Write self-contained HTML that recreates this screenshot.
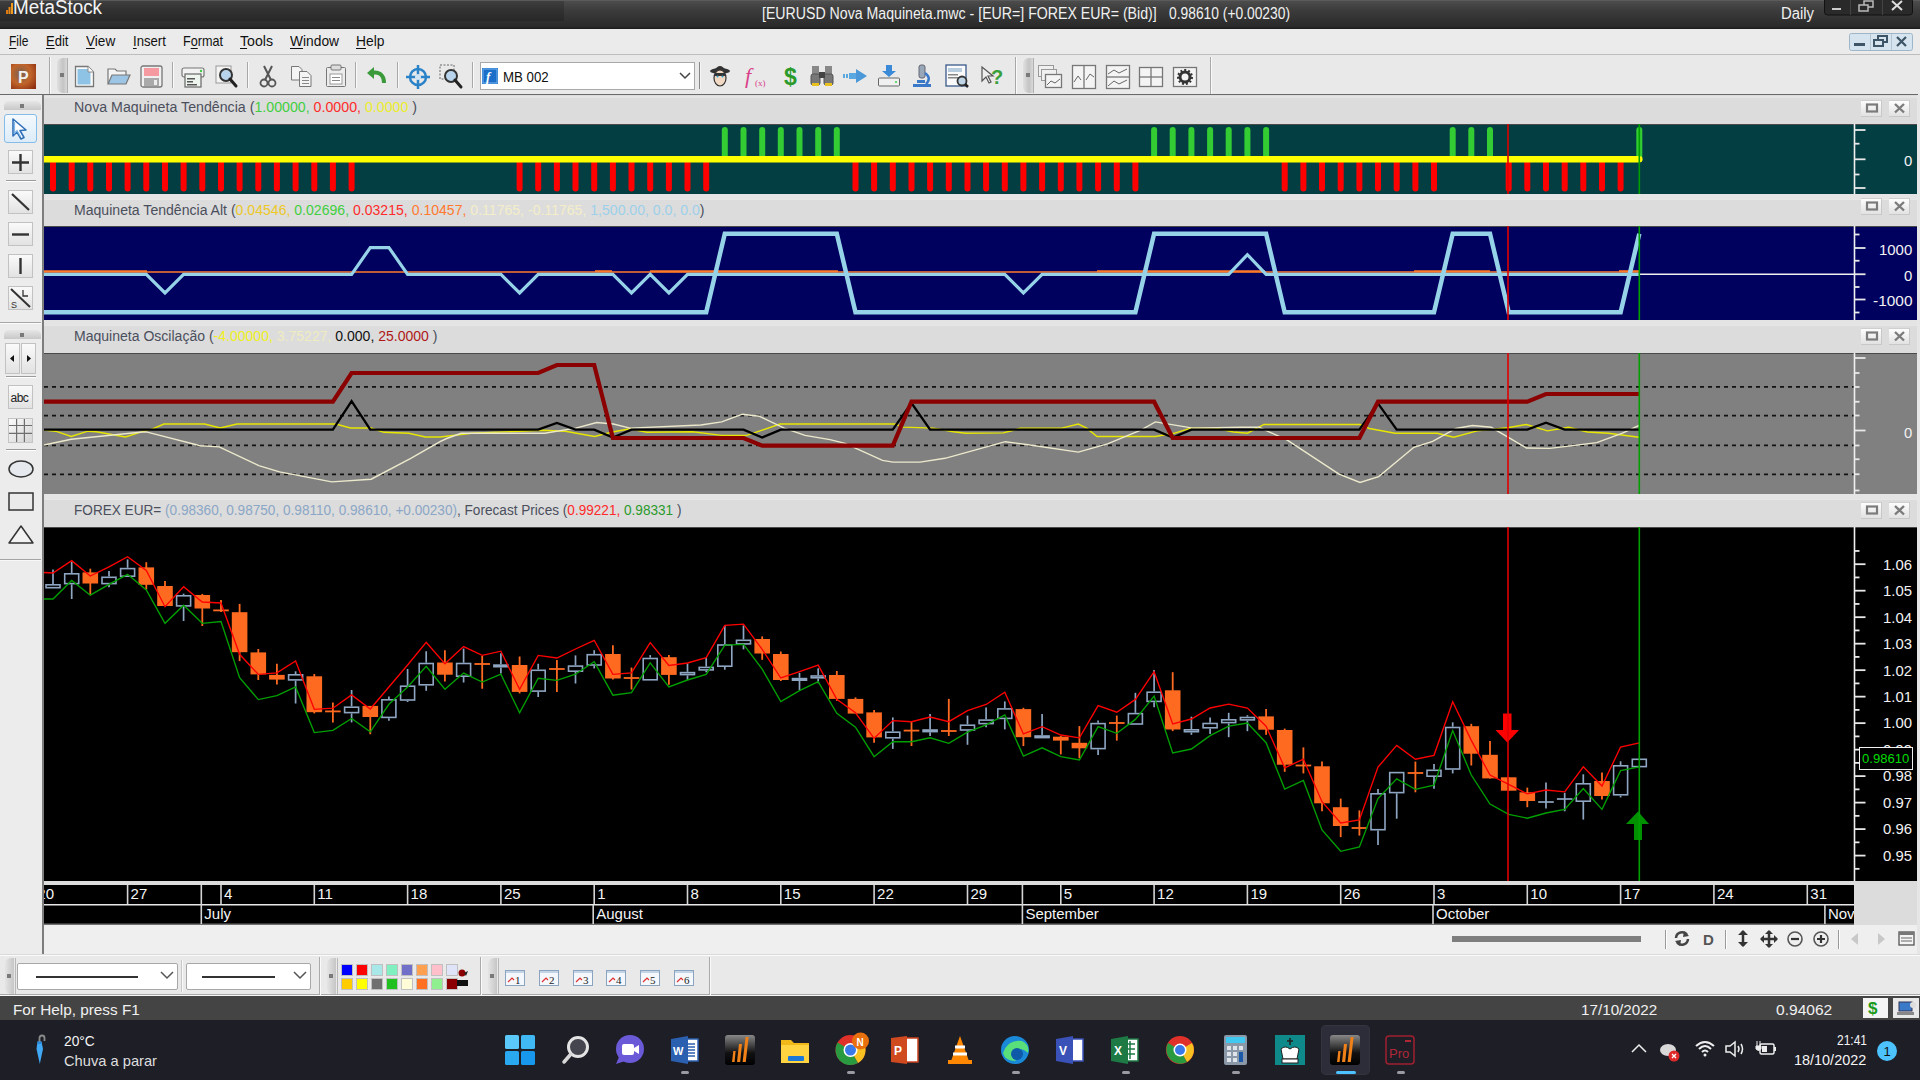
<!DOCTYPE html><html><head><meta charset="utf-8"><style>
html,body{margin:0;padding:0;width:1920px;height:1080px;overflow:hidden;background:#e9e9e9;font-family:"Liberation Sans",sans-serif;}
.t{position:absolute;white-space:nowrap;line-height:1;}
svg{position:absolute;overflow:visible}
</style></head><body>
<div style="position:absolute;left:0px;top:0px;width:1920px;height:29px;background:linear-gradient(#626262 0px,#4b4b4b 1.5px,#3c3c3c 10px,#2a2a2a 26.5px,#1d1d1d 28.5px)"></div>
<div style="position:absolute;left:0px;top:1px;width:564px;height:20px;background:rgba(0,0,0,0.17)"></div>
<svg style="left:0;top:0" width="20" height="20"><rect x="6" y="10" width="2" height="4" fill="#e07a10"/><rect x="8.5" y="7" width="2" height="7" fill="#e88a18"/><rect x="11" y="3" width="2" height="11" fill="#f09a20"/></svg>
<div class="t " style="left:13.4px;top:-3.33px;font-size:20px;color:#f4f4f4;;transform:scaleX(0.9420);transform-origin:0 0">MetaStock</div>
<div class="t " style="left:762px;top:6.06px;font-size:16px;color:#f0f0f0;;transform:scaleX(0.8843);transform-origin:0 0">[EURUSD Nova Maquineta.mwc - [EUR=] FOREX EUR= (Bid)]</div>
<div class="t " style="left:1169px;top:6.06px;font-size:16px;color:#f0f0f0;;transform:scaleX(0.8635);transform-origin:0 0">0.98610 (+0.00230)</div>
<div class="t " style="left:1781px;top:6.06px;font-size:16px;color:#f0f0f0;;transform:scaleX(0.9279);transform-origin:0 0">Daily</div>
<svg style="left:1824;top:0" width="96" height="17"><rect x="0.5" y="-2" width="88" height="17" rx="3" fill="#2a2a2a" stroke="#111"/><line x1="26.5" y1="0" x2="26.5" y2="15" stroke="#444"/><line x1="58.5" y1="0" x2="58.5" y2="15" stroke="#444"/><rect x="8" y="8" width="9" height="2" fill="#ccc"/><rect x="40" y="1" width="9" height="6" fill="none" stroke="#bbb" stroke-width="1.5"/><rect x="35" y="5" width="9" height="6" fill="#2a2a2a" stroke="#bbb" stroke-width="1.5"/><path d="M68 1 L78 10 M78 1 L68 10" stroke="#ddd" stroke-width="2"/></svg>
<div style="position:absolute;left:0px;top:29px;width:1920px;height:25px;background:#ebebeb;border-bottom:1px solid #bdbdbd"></div>
<div class="t " style="left:9.4px;top:33.3px;font-size:15px;color:#111;text-decoration-thickness:1px;text-underline-offset:2px;transform:scaleX(0.8021);transform-origin:0 0"><u>F</u>ile</div>
<div class="t " style="left:46.25px;top:33.3px;font-size:15px;color:#111;text-decoration-thickness:1px;text-underline-offset:2px;transform:scaleX(0.8701);transform-origin:0 0"><u>E</u>dit</div>
<div class="t " style="left:85.8px;top:33.3px;font-size:15px;color:#111;text-decoration-thickness:1px;text-underline-offset:2px;transform:scaleX(0.9054);transform-origin:0 0"><u>V</u>iew</div>
<div class="t " style="left:132.7px;top:33.3px;font-size:15px;color:#111;text-decoration-thickness:1px;text-underline-offset:2px;transform:scaleX(0.8766);transform-origin:0 0"><u>I</u>nsert</div>
<div class="t " style="left:183px;top:33.3px;font-size:15px;color:#111;text-decoration-thickness:1px;text-underline-offset:2px;transform:scaleX(0.8418);transform-origin:0 0">F<u>o</u>rmat</div>
<div class="t " style="left:240px;top:33.3px;font-size:15px;color:#111;text-decoration-thickness:1px;text-underline-offset:2px;transform:scaleX(0.9420);transform-origin:0 0"><u>T</u>ools</div>
<div class="t " style="left:290px;top:33.3px;font-size:15px;color:#111;text-decoration-thickness:1px;text-underline-offset:2px;transform:scaleX(0.9180);transform-origin:0 0"><u>W</u>indow</div>
<div class="t " style="left:356px;top:33.3px;font-size:15px;color:#111;text-decoration-thickness:1px;text-underline-offset:2px;transform:scaleX(0.9198);transform-origin:0 0"><u>H</u>elp</div>
<svg style="left:1849;top:33" width="66" height="19"><rect x="0.5" y="0.5" width="63" height="17" rx="2" fill="#d6e4ef" stroke="#9fb6c8"/><line x1="21.5" y1="1" x2="21.5" y2="17" stroke="#b4c6d4"/><line x1="42.5" y1="1" x2="42.5" y2="17" stroke="#b4c6d4"/><rect x="5" y="10" width="11" height="3" fill="#3d5566"/><rect x="29" y="3" width="9" height="6" fill="none" stroke="#3d5566" stroke-width="2"/><rect x="25" y="7" width="9" height="6" fill="#d6e4ef" stroke="#3d5566" stroke-width="2"/><path d="M48 4 L57 13 M57 4 L48 13" stroke="#3d5566" stroke-width="2.2"/></svg>
<div style="position:absolute;left:0px;top:55px;width:1920px;height:39px;background:#e9e9e9"></div>
<div style="position:absolute;left:0px;top:94px;width:1918px;height:2px;background:#6a6a6a"></div>
<svg style="left:11px;top:64px" width="26" height="25" viewBox="0 0 26 25"><defs><radialGradient id="pg" cx="40%" cy="40%" r="80%"><stop offset="0" stop-color="#7a6050"/><stop offset="0.5" stop-color="#c0642a"/><stop offset="1" stop-color="#8a2a10"/></radialGradient></defs><rect width="25" height="25" fill="url(#pg)"/><text x="7" y="19" font-size="16" font-weight="bold" fill="#f0f0f0" font-family="Liberation Sans">P</text></svg>
<div style="position:absolute;left:49px;top:57px;width:1px;height:37px;background:#a8a8a8"></div>
<div style="position:absolute;left:50px;top:57px;width:1px;height:37px;background:#fafafa"></div>
<div style="position:absolute;left:57px;top:58px;width:10px;height:35px;background:linear-gradient(90deg,#e0e0e0,#c4c4c4 60%,#d8d8d8);border-radius:6px 0 0 6px"></div>
<div style="position:absolute;left:60px;top:73px;width:4px;height:4px;background:#7a7a7a"></div>
<div style="position:absolute;left:67px;top:58px;width:1px;height:35px;background:#b0b0b0"></div>
<svg style="left:74px;top:65px" width="21" height="23" viewBox="0 0 21 23"><path d="M1.5 1.5 H14 L19.5 7 V21.5 H1.5 Z" fill="#fafafa" stroke="#777" stroke-width="1.3"/><rect x="3.5" y="4" width="13" height="15.5" fill="#8ec3e6"/><path d="M14 1.5 V7 H19.5" fill="#fff" stroke="#888"/></svg>
<svg style="left:107px;top:66px" width="24" height="20" viewBox="0 0 24 20"><path d="M1 3 H8 L10 5 H19 V17 H1 Z" fill="#f4f4f4" stroke="#777" stroke-width="1.2"/><path d="M1 18 L5 9 H23 L19 18 Z" fill="#9cc4e4" stroke="#777" stroke-width="1.2"/></svg>
<svg style="left:140px;top:65px" width="23" height="23" viewBox="0 0 23 23"><rect x="1" y="1" width="21" height="21" rx="2" fill="#f0f0f0" stroke="#777" stroke-width="1.3"/><rect x="4" y="3" width="15" height="8" fill="#f59aa0"/><rect x="4" y="13" width="15" height="8" fill="#aaa"/><rect x="14" y="15" width="3" height="5" fill="#eee"/></svg>
<div style="position:absolute;left:172px;top:62px;width:1px;height:26px;background:#a8a8a8"></div>
<div style="position:absolute;left:173px;top:62px;width:1px;height:26px;background:#fafafa"></div>
<svg style="left:181px;top:66px" width="24" height="22" viewBox="0 0 24 22"><rect x="1" y="2" width="22" height="9" rx="2" fill="#f2f2f2" stroke="#777" stroke-width="1.2"/><rect x="4" y="8" width="16" height="13" fill="#eef4ee" stroke="#666" stroke-width="1.2"/><rect x="6" y="12" width="8" height="1.5" fill="#555"/><rect x="6" y="15" width="6" height="1.5" fill="#555"/><rect x="6" y="18" width="10" height="1.5" fill="#555"/><circle cx="20" cy="5" r="1.2" fill="#4c4"/></svg>
<svg style="left:215px;top:65px" width="23" height="24" viewBox="0 0 23 24"><rect x="1" y="1" width="15" height="17" fill="#f4f4f4" stroke="#999"/><circle cx="11" cy="10" r="6" fill="#b8d4ec" stroke="#333" stroke-width="2"/><path d="M15 14 L21 21" stroke="#222" stroke-width="3" stroke-linecap="round"/></svg>
<div style="position:absolute;left:247px;top:62px;width:1px;height:26px;background:#a8a8a8"></div>
<div style="position:absolute;left:248px;top:62px;width:1px;height:26px;background:#fafafa"></div>
<svg style="left:259px;top:65px" width="18" height="23" viewBox="0 0 18 23"><path d="M5 1 L12 15 M13 1 L6 15" stroke="#555" stroke-width="2"/><circle cx="5" cy="18" r="3.5" fill="none" stroke="#555" stroke-width="1.8"/><circle cx="13" cy="18" r="3.5" fill="none" stroke="#555" stroke-width="1.8"/></svg>
<svg style="left:290px;top:65px" width="23" height="23" viewBox="0 0 23 23"><path d="M1.5 1.5 H9 L12 4.5 V15 H1.5 Z" fill="#f4f4f4" stroke="#777"/><path d="M9.5 6.5 H17 L21 10.5 V21.5 H9.5 Z" fill="#f4f4f4" stroke="#777"/><rect x="12" y="12" width="7" height="1" fill="#888"/><rect x="12" y="15" width="7" height="1" fill="#888"/><rect x="12" y="18" width="7" height="1" fill="#888"/></svg>
<svg style="left:325px;top:64px" width="22" height="24" viewBox="0 0 22 24"><rect x="1.5" y="3.5" width="19" height="19" rx="1" fill="#ececec" stroke="#777"/><rect x="6" y="1" width="10" height="5" rx="1" fill="#ddd" stroke="#777"/><rect x="5" y="10" width="12" height="10" fill="#fff" stroke="#999"/><rect x="7" y="13" width="8" height="1" fill="#888"/><rect x="7" y="16" width="8" height="1" fill="#888"/></svg>
<div style="position:absolute;left:355px;top:62px;width:1px;height:26px;background:#a8a8a8"></div>
<div style="position:absolute;left:356px;top:62px;width:1px;height:26px;background:#fafafa"></div>
<svg style="left:366px;top:66px" width="21" height="20" viewBox="0 0 21 20"><path d="M18 17 C18 8 12 5 5 7" fill="none" stroke="#3a9a3a" stroke-width="4"/><path d="M1 7 L8 1 L8 13 Z" fill="#3a9a3a"/></svg>
<div style="position:absolute;left:397px;top:62px;width:1px;height:26px;background:#a8a8a8"></div>
<div style="position:absolute;left:398px;top:62px;width:1px;height:26px;background:#fafafa"></div>
<svg style="left:405px;top:64px" width="26" height="26" viewBox="0 0 26 26"><circle cx="13" cy="13" r="8" fill="none" stroke="#2a82c8" stroke-width="2.5"/><path d="M13 1 V25 M1 13 H25" stroke="#2a82c8" stroke-width="2.5"/><circle cx="13" cy="13" r="3" fill="#cfe4f4"/></svg>
<svg style="left:439px;top:64px" width="24" height="26" viewBox="0 0 24 26"><rect x="1" y="1" width="14" height="14" fill="none" stroke="#666" stroke-dasharray="2 1.5"/><circle cx="12" cy="12" r="6" fill="#b8d4ec" stroke="#333" stroke-width="2"/><path d="M16 16 L22 23" stroke="#222" stroke-width="3" stroke-linecap="round"/></svg>
<div style="position:absolute;left:472px;top:62px;width:1px;height:26px;background:#a8a8a8"></div>
<div style="position:absolute;left:473px;top:62px;width:1px;height:26px;background:#fafafa"></div>
<div style="position:absolute;left:480px;top:62px;width:215px;height:28px;background:#fff;border:1px solid #a9a9a9;box-sizing:border-box"></div>
<svg style="left:482px;top:68px" width="17" height="17" viewBox="0 0 17 17"><rect width="16" height="16" fill="#1b6fc8"/><rect x="1" y="1" width="14" height="14" fill="none" stroke="#7ab4ee"/><text x="4" y="13" font-size="13" font-style="italic" font-weight="bold" fill="#fff" font-family="Liberation Serif">f</text></svg>
<div class="t " style="left:503px;top:69.3px;font-size:15px;color:#111;;transform:scaleX(0.8849);transform-origin:0 0">MB 002</div>
<svg style="left:679px;top:72px" width="12" height="8" viewBox="0 0 12 8"><path d="M1 1 L6 6 L11 1" fill="none" stroke="#444" stroke-width="1.5"/></svg>
<div style="position:absolute;left:699px;top:62px;width:1px;height:27px;background:#888"></div>
<div style="position:absolute;left:700px;top:62px;width:1px;height:27px;background:#f5f5f5"></div>
<svg style="left:709px;top:64px" width="22" height="24" viewBox="0 0 22 24"><ellipse cx="11" cy="7" rx="10" ry="3" fill="#333"/><path d="M5 7 Q11 -3 17 7 Z" fill="#333"/><ellipse cx="11" cy="14" rx="6" ry="8" fill="#f2d9c4" stroke="#333" stroke-width="1.2"/><rect x="6" y="9" width="10" height="3" fill="#333"/><circle cx="8.5" cy="12.5" r="1" fill="#39c"/><circle cx="13.5" cy="12.5" r="1" fill="#39c"/></svg>
<svg style="left:743px;top:64px" width="24" height="24" viewBox="0 0 24 24"><text x="2" y="19" font-size="22" font-style="italic" fill="#d9408a" font-family="Liberation Serif">f</text><text x="12" y="22" font-size="9" fill="#d9408a" font-family="Liberation Serif">(x)</text></svg>
<svg style="left:780px;top:63px" width="22" height="26" viewBox="0 0 22 26"><text x="4" y="22" font-size="23" font-weight="bold" fill="#2a9a2a" font-family="Liberation Sans">$</text></svg>
<svg style="left:810px;top:64px" width="24" height="24" viewBox="0 0 24 24"><rect x="2" y="2" width="7" height="10" fill="#888"/><rect x="15" y="2" width="7" height="10" fill="#888"/><rect x="1" y="10" width="9" height="11" rx="2" fill="#777" stroke="#555"/><rect x="14" y="10" width="9" height="11" rx="2" fill="#777" stroke="#555"/><rect x="9" y="8" width="6" height="6" fill="#444"/><rect x="2" y="19" width="7" height="3" fill="#e8c020"/><rect x="15" y="19" width="7" height="3" fill="#e8c020"/></svg>
<svg style="left:842px;top:68px" width="26" height="16" viewBox="0 0 26 16"><rect x="1" y="6" width="2" height="4" fill="#5aa8e0"/><rect x="4" y="6" width="2" height="4" fill="#5aa8e0"/><rect x="7" y="5" width="8" height="6" fill="#5aa8e0"/><path d="M14 1 L25 8 L14 15 Z" fill="#4a98d8"/></svg>
<svg style="left:877px;top:64px" width="24" height="24" viewBox="0 0 24 24"><path d="M9 1 H15 V7 H19 L12 13 L5 7 H9 Z" fill="#3a8ad8"/><rect x="1.5" y="14" width="21" height="8" rx="1" fill="#f0f0f0" stroke="#666"/><circle cx="19" cy="18" r="1" fill="#4c4"/></svg>
<svg style="left:911px;top:64px" width="22" height="25" viewBox="0 0 22 25"><rect x="8" y="1" width="6" height="13" rx="2" fill="#98a8b8" stroke="#667"/><path d="M14 9 Q21 14 15 20" fill="none" stroke="#3a78c8" stroke-width="2.5"/><rect x="2" y="20" width="18" height="3" fill="#3a78c8"/><rect x="6" y="16" width="8" height="3" fill="#3a78c8"/></svg>
<svg style="left:945px;top:64px" width="24" height="24" viewBox="0 0 24 24"><rect x="1" y="1" width="20" height="21" fill="#fafafa" stroke="#3a5a8a" stroke-width="1.3"/><rect x="3" y="4" width="14" height="4" fill="#b8cce0"/><rect x="3" y="10" width="10" height="1.5" fill="#888"/><rect x="3" y="13" width="10" height="1.5" fill="#888"/><circle cx="17" cy="17" r="4.5" fill="#c0d4e8" stroke="#333" stroke-width="1.8"/><path d="M20 20 L23 23" stroke="#222" stroke-width="2.5"/></svg>
<svg style="left:980px;top:65px" width="24" height="23" viewBox="0 0 24 23"><path d="M2 2 L2 16 L6 12 L9 18 L11 17 L8 11 L13 11 Z" fill="#eee" stroke="#555" stroke-width="1.2"/><text x="11" y="19" font-size="20" font-weight="bold" fill="#3aa03a" font-family="Liberation Sans">?</text></svg>
<div style="position:absolute;left:1015px;top:57px;width:1px;height:37px;background:#a8a8a8"></div>
<div style="position:absolute;left:1016px;top:57px;width:1px;height:37px;background:#fafafa"></div>
<div style="position:absolute;left:1023px;top:58px;width:10px;height:35px;background:linear-gradient(90deg,#e0e0e0,#c4c4c4 60%,#d8d8d8);border-radius:6px 0 0 6px"></div>
<div style="position:absolute;left:1026px;top:73px;width:4px;height:4px;background:#7a7a7a"></div>
<div style="position:absolute;left:1033px;top:58px;width:1px;height:35px;background:#b0b0b0"></div>
<svg style="left:1037px;top:64px" width="26" height="26" viewBox="0 0 26 26"><rect x="1.5" y="1.5" width="15" height="11" fill="#f0f0f0" stroke="#999"/><rect x="4.5" y="5.5" width="15" height="11" fill="#f0f0f0" stroke="#999"/><rect x="8.5" y="10.5" width="16" height="13" fill="#f4f4f4" stroke="#777" stroke-width="1.3"/><path d="M10 21 L14 17 L18 19 L23 15" fill="none" stroke="#666"/></svg>
<svg style="left:1071px;top:64px" width="26" height="26" viewBox="0 0 26 26"><rect x="1.5" y="1.5" width="23" height="23" fill="#f4f4f4" stroke="#777" stroke-width="1.3"/><line x1="13" y1="1" x2="13" y2="25" stroke="#777" stroke-width="1.3"/><path d="M3 18 L7 12 L10 16 M15 16 L19 10 L23 13" fill="none" stroke="#666"/></svg>
<svg style="left:1105px;top:64px" width="26" height="26" viewBox="0 0 26 26"><rect x="1.5" y="1.5" width="23" height="23" fill="#f4f4f4" stroke="#777" stroke-width="1.3"/><line x1="1" y1="13" x2="25" y2="13" stroke="#777" stroke-width="1.3"/><path d="M3 10 L9 6 L14 9 L22 5 M3 22 L9 17 L14 20 L22 16" fill="none" stroke="#666"/></svg>
<svg style="left:1138px;top:64px" width="26" height="26" viewBox="0 0 26 26"><rect x="1.5" y="3.5" width="23" height="19" fill="#f4f4f4" stroke="#777" stroke-width="1.3"/><line x1="13" y1="3" x2="13" y2="23" stroke="#777" stroke-width="1.3"/><line x1="1" y1="13" x2="25" y2="13" stroke="#777" stroke-width="1.3"/></svg>
<svg style="left:1172px;top:64px" width="26" height="26" viewBox="0 0 26 26"><rect x="1.5" y="3.5" width="23" height="19" fill="#f4f4f4" stroke="#777" stroke-width="1.3"/><circle cx="13" cy="13" r="5" fill="none" stroke="#333" stroke-width="3"/><circle cx="13" cy="13" r="7" fill="none" stroke="#333" stroke-width="2" stroke-dasharray="2 2"/></svg>
<div style="position:absolute;left:1210px;top:57px;width:1px;height:37px;background:#a8a8a8"></div>
<div style="position:absolute;left:1211px;top:57px;width:1px;height:37px;background:#fafafa"></div>
<div style="position:absolute;left:0px;top:95px;width:42px;height:859px;background:#ececec"></div>
<div style="position:absolute;left:42px;top:95px;width:2px;height:859px;background:#7d7d7d"></div>
<div style="position:absolute;left:4px;top:101px;width:37px;height:9px;background:linear-gradient(#e6e6e6,#c8c8c8);border-radius:5px 5px 0 0"></div>
<div style="position:absolute;left:20px;top:104px;width:4px;height:4px;background:#7a7a7a"></div>
<div style="position:absolute;left:4px;top:114px;width:33px;height:29px;background:linear-gradient(#f4f9fd,#dcecf8);border:1px solid #86bde8;border-radius:3px;box-sizing:border-box"></div>
<svg style="left:4px;top:114px" width="33" height="29" viewBox="0 0 33 29"><path d="M9 5 L9 22 L13 18 L17 25 L20 23.5 L16 16.5 L22 16 Z" fill="#fff" stroke="#2f6fb8" stroke-width="1.6" stroke-linejoin="round"/><path d="M10.5 8 L10.5 19 L13 16.5 L16.5 22.5" fill="none" stroke="#7fb6e8" stroke-width="1.2"/></svg>
<div style="position:absolute;left:8px;top:150px;width:25px;height:24px;background:linear-gradient(#fafafa,#e2e2e2);border:1px solid #c2c2c2;box-sizing:border-box"></div>
<svg style="left:8px;top:150px" width="25" height="24" viewBox="0 0 25 24"><path d="M12.5 4 V21 M4 12.5 H21" stroke="#333" stroke-width="2.4"/></svg>
<div style="position:absolute;left:6px;top:180px;width:30px;height:1px;background:#9a9a9a"></div>
<div style="position:absolute;left:6px;top:181px;width:30px;height:1px;background:#fff"></div>
<div style="position:absolute;left:8px;top:190px;width:25px;height:24px;background:linear-gradient(#fafafa,#e2e2e2);border:1px solid #c2c2c2;box-sizing:border-box"></div>
<svg style="left:8px;top:190px" width="25" height="24" viewBox="0 0 25 24"><path d="M4 4 L21 20" stroke="#333" stroke-width="2.2"/></svg>
<div style="position:absolute;left:8px;top:222px;width:25px;height:24px;background:linear-gradient(#fafafa,#e2e2e2);border:1px solid #c2c2c2;box-sizing:border-box"></div>
<svg style="left:8px;top:222px" width="25" height="24" viewBox="0 0 25 24"><path d="M4 12.5 H21" stroke="#333" stroke-width="2.4"/></svg>
<div style="position:absolute;left:8px;top:254px;width:25px;height:24px;background:linear-gradient(#fafafa,#e2e2e2);border:1px solid #c2c2c2;box-sizing:border-box"></div>
<svg style="left:8px;top:254px" width="25" height="24" viewBox="0 0 25 24"><path d="M12.5 4 V20" stroke="#333" stroke-width="2.4"/></svg>
<div style="position:absolute;left:8px;top:286px;width:25px;height:24px;background:linear-gradient(#fafafa,#e2e2e2);border:1px solid #c2c2c2;box-sizing:border-box"></div>
<svg style="left:8px;top:286px" width="25" height="24" viewBox="0 0 25 24"><path d="M3 3 L22 21" stroke="#333" stroke-width="2"/><path d="M15 4 V10 H20" fill="none" stroke="#333" stroke-width="1.3"/><text x="3" y="22" font-size="9" fill="#333" font-family="Liberation Sans">S</text></svg>
<div style="position:absolute;left:0px;top:322px;width:41px;height:1px;background:#a8a8a8"></div>
<div style="position:absolute;left:0px;top:323px;width:41px;height:1px;background:#fafafa"></div>
<div style="position:absolute;left:0px;top:559px;width:41px;height:1px;background:#a4a4a4"></div>
<div style="position:absolute;left:0px;top:560px;width:41px;height:1px;background:#f8f8f8"></div>
<div style="position:absolute;left:4px;top:330px;width:37px;height:9px;background:linear-gradient(#e6e6e6,#c8c8c8);border-radius:5px 5px 0 0"></div>
<div style="position:absolute;left:20px;top:333px;width:4px;height:4px;background:#7a7a7a"></div>
<div style="position:absolute;left:5px;top:343px;width:15px;height:31px;background:linear-gradient(#fafafa,#e2e2e2);border:1px solid #c2c2c2;box-sizing:border-box"></div>
<svg style="left:5px;top:343px" width="15" height="31" viewBox="0 0 15 31"><path d="M9 12 L5 15.5 L9 19 Z" fill="#111"/></svg>
<div style="position:absolute;left:21px;top:343px;width:15px;height:31px;background:linear-gradient(#fafafa,#e2e2e2);border:1px solid #c2c2c2;box-sizing:border-box"></div>
<svg style="left:21px;top:343px" width="15" height="31" viewBox="0 0 15 31"><path d="M6 12 L10 15.5 L6 19 Z" fill="#111"/></svg>
<div style="position:absolute;left:6px;top:376px;width:30px;height:1px;background:#9a9a9a"></div>
<div style="position:absolute;left:6px;top:377px;width:30px;height:1px;background:#fff"></div>
<div style="position:absolute;left:8px;top:385px;width:25px;height:24px;background:linear-gradient(#fafafa,#e2e2e2);border:1px solid #c2c2c2;box-sizing:border-box"></div>
<svg style="left:8px;top:385px" width="25" height="24" viewBox="0 0 25 24"><text x="2.5" y="17" font-size="12" fill="#222" font-family="Liberation Sans" letter-spacing="-0.5">abc</text></svg>
<svg style="left:8px;top:418px" width="25" height="25" viewBox="0 0 25 25"><defs><linearGradient id="gg" x1="0" y1="0" x2="1" y2="1"><stop offset="0" stop-color="#fcfcfc"/><stop offset="1" stop-color="#d4d4d4"/></linearGradient></defs><rect x="0.5" y="0.5" width="24" height="24" fill="url(#gg)" stroke="#c4c4c4"/><path d="M1 7.5 H24 M1 15.3 H24 M8.6 1 V24 M16.4 1 V24" stroke="#6e6e6e" stroke-width="1.2"/></svg>
<div style="position:absolute;left:6px;top:449px;width:30px;height:1px;background:#9a9a9a"></div>
<div style="position:absolute;left:6px;top:450px;width:30px;height:1px;background:#fff"></div>
<svg style="left:7px;top:458px" width="28" height="22" viewBox="0 0 28 22"><ellipse cx="14" cy="11" rx="12" ry="8" fill="#e6eaee" stroke="#333" stroke-width="1.5"/></svg>
<svg style="left:8px;top:492px" width="26" height="20" viewBox="0 0 26 20"><rect x="1" y="1" width="24" height="17" fill="#eaeaea" stroke="#333" stroke-width="1.5"/></svg>
<svg style="left:7px;top:524px" width="28" height="21" viewBox="0 0 28 21"><path d="M14 2 L26 19 H2 Z" fill="#f2f2f2" stroke="#333" stroke-width="1.5" stroke-linejoin="round"/></svg>
<div style="position:absolute;left:44px;top:95px;width:1876px;height:830px;background:#dcdcdc"></div>
<div style="position:absolute;left:1917px;top:95px;width:3px;height:860px;background:#e6e6e6"></div>
<div style="position:absolute;left:44px;top:96px;width:1873px;height:2px;background:#e4e4e4"></div>
<div style="position:absolute;left:44px;top:98px;width:1873px;height:26px;background:#dcdcdc"></div>
<div class="t hdr" style="left:74.3px;top:98.58px;font-size:15.5px;color:#4b4f5c;;transform:scaleX(0.9156);transform-origin:0 0"><span style="color:#4b4f5c">Nova Maquineta Tendência (</span><span style="color:#3fcf3f">1.00000, </span><span style="color:#ff2a2a">0.0000, </span><span style="color:#eded2a">0.0000</span><span style="color:#4b4f5c"> )</span></div>
<div style="position:absolute;left:1861px;top:100px;width:21px;height:17px;background:linear-gradient(#fdfdfd,#e2e2e2);border-right:1px solid #c8c8c8;border-bottom:1px solid #c8c8c8;border-top:1px solid #cfcfcf;box-sizing:border-box"></div>
<svg style="left:1861px;top:100px" width="21" height="17" viewBox="0 0 21 17"><rect x="6" y="4.5" width="10" height="7" fill="none" stroke="#7b7b7b" stroke-width="2.2"/></svg>
<div style="position:absolute;left:1889px;top:100px;width:21px;height:17px;background:linear-gradient(#fdfdfd,#e2e2e2);border-right:1px solid #c8c8c8;border-bottom:1px solid #c8c8c8;border-top:1px solid #cfcfcf;box-sizing:border-box"></div>
<svg style="left:1889px;top:100px" width="21" height="17" viewBox="0 0 21 17"><path d="M6 4 L15 12.5 M15 4 L6 12.5" stroke="#7b7b7b" stroke-width="2.4"/></svg>
<div style="position:absolute;left:44px;top:194px;width:1873px;height:5px;background:#e4e4e4"></div>
<div style="position:absolute;left:44px;top:199px;width:1873px;height:27px;background:#dcdcdc"></div>
<div style="position:absolute;left:44px;top:199px;width:1873px;height:1px;background:#e6e6e6"></div>
<div class="t hdr" style="left:74.3px;top:201.58px;font-size:15.5px;color:#4b4f5c;;transform:scaleX(0.9075);transform-origin:0 0"><span style="color:#4b4f5c">Maquineta Tendência Alt (</span><span style="color:#ecc828">0.04546, </span><span style="color:#3fcf3f">0.02696, </span><span style="color:#ff2a2a">0.03215, </span><span style="color:#ff7a30">0.10457, </span><span style="color:#f4eec8">0.11765, </span><span style="color:#f4eec8">-0.11765, </span><span style="color:#9cd0ea">1,500.00, </span><span style="color:#9cd0ea">0.0, </span><span style="color:#9cd0ea">0.0</span><span style="color:#4b4f5c">)</span></div>
<div style="position:absolute;left:1861px;top:198px;width:21px;height:17px;background:linear-gradient(#fdfdfd,#e2e2e2);border-right:1px solid #c8c8c8;border-bottom:1px solid #c8c8c8;border-top:1px solid #cfcfcf;box-sizing:border-box"></div>
<svg style="left:1861px;top:198px" width="21" height="17" viewBox="0 0 21 17"><rect x="6" y="4.5" width="10" height="7" fill="none" stroke="#7b7b7b" stroke-width="2.2"/></svg>
<div style="position:absolute;left:1889px;top:198px;width:21px;height:17px;background:linear-gradient(#fdfdfd,#e2e2e2);border-right:1px solid #c8c8c8;border-bottom:1px solid #c8c8c8;border-top:1px solid #cfcfcf;box-sizing:border-box"></div>
<svg style="left:1889px;top:198px" width="21" height="17" viewBox="0 0 21 17"><path d="M6 4 L15 12.5 M15 4 L6 12.5" stroke="#7b7b7b" stroke-width="2.4"/></svg>
<div style="position:absolute;left:44px;top:320px;width:1873px;height:5px;background:#e4e4e4"></div>
<div style="position:absolute;left:44px;top:325px;width:1873px;height:28px;background:#dcdcdc"></div>
<div style="position:absolute;left:44px;top:325px;width:1873px;height:1px;background:#e6e6e6"></div>
<div class="t hdr" style="left:74.3px;top:327.58px;font-size:15.5px;color:#4b4f5c;;transform:scaleX(0.9051);transform-origin:0 0"><span style="color:#4b4f5c">Maquineta Oscilação (</span><span style="color:#f0f020">-4.00000, </span><span style="color:#f0ecc0">3.75227, </span><span style="color:#111">0.000, </span><span style="color:#b01818">25.0000</span><span style="color:#4b4f5c"> )</span></div>
<div style="position:absolute;left:1861px;top:328px;width:21px;height:17px;background:linear-gradient(#fdfdfd,#e2e2e2);border-right:1px solid #c8c8c8;border-bottom:1px solid #c8c8c8;border-top:1px solid #cfcfcf;box-sizing:border-box"></div>
<svg style="left:1861px;top:328px" width="21" height="17" viewBox="0 0 21 17"><rect x="6" y="4.5" width="10" height="7" fill="none" stroke="#7b7b7b" stroke-width="2.2"/></svg>
<div style="position:absolute;left:1889px;top:328px;width:21px;height:17px;background:linear-gradient(#fdfdfd,#e2e2e2);border-right:1px solid #c8c8c8;border-bottom:1px solid #c8c8c8;border-top:1px solid #cfcfcf;box-sizing:border-box"></div>
<svg style="left:1889px;top:328px" width="21" height="17" viewBox="0 0 21 17"><path d="M6 4 L15 12.5 M15 4 L6 12.5" stroke="#7b7b7b" stroke-width="2.4"/></svg>
<div style="position:absolute;left:44px;top:494px;width:1873px;height:5px;background:#e4e4e4"></div>
<div style="position:absolute;left:44px;top:499px;width:1873px;height:28px;background:#dcdcdc"></div>
<div style="position:absolute;left:44px;top:499px;width:1873px;height:1px;background:#e6e6e6"></div>
<div class="t hdr" style="left:74.3px;top:501.68px;font-size:15.5px;color:#4b4f5c;;transform:scaleX(0.8772);transform-origin:0 0"><span style="color:#4b4f5c">FOREX EUR= </span><span style="color:#8ba6c6">(0.98360, 0.98750, 0.98110, 0.98610, +0.00230)</span><span style="color:#4b4f5c">, Forecast Prices (</span><span style="color:#ff2a2a">0.99221, </span><span style="color:#2a9a2a">0.98331</span><span style="color:#4b4f5c"> )</span></div>
<div style="position:absolute;left:1861px;top:502px;width:21px;height:17px;background:linear-gradient(#fdfdfd,#e2e2e2);border-right:1px solid #c8c8c8;border-bottom:1px solid #c8c8c8;border-top:1px solid #cfcfcf;box-sizing:border-box"></div>
<svg style="left:1861px;top:502px" width="21" height="17" viewBox="0 0 21 17"><rect x="6" y="4.5" width="10" height="7" fill="none" stroke="#7b7b7b" stroke-width="2.2"/></svg>
<div style="position:absolute;left:1889px;top:502px;width:21px;height:17px;background:linear-gradient(#fdfdfd,#e2e2e2);border-right:1px solid #c8c8c8;border-bottom:1px solid #c8c8c8;border-top:1px solid #cfcfcf;box-sizing:border-box"></div>
<svg style="left:1889px;top:502px" width="21" height="17" viewBox="0 0 21 17"><path d="M6 4 L15 12.5 M15 4 L6 12.5" stroke="#7b7b7b" stroke-width="2.4"/></svg>
<div style="position:absolute;left:44px;top:124px;width:1873px;height:70px;background:#033f42"></div>
<div style="position:absolute;left:44px;top:124px;width:1873px;height:1px;background:#4a4a4a"></div>
<svg style="left:44px;top:124px;overflow:hidden" width="1873" height="70" viewBox="44 124 1873 70"><line x1="53.0" y1="162" x2="53.0" y2="188.5" stroke="#ff0000" stroke-width="6" stroke-linecap="round"/><line x1="71.7" y1="162" x2="71.7" y2="188.5" stroke="#ff0000" stroke-width="6" stroke-linecap="round"/><line x1="90.3" y1="162" x2="90.3" y2="188.5" stroke="#ff0000" stroke-width="6" stroke-linecap="round"/><line x1="109.0" y1="162" x2="109.0" y2="188.5" stroke="#ff0000" stroke-width="6" stroke-linecap="round"/><line x1="127.6" y1="162" x2="127.6" y2="188.5" stroke="#ff0000" stroke-width="6" stroke-linecap="round"/><line x1="146.3" y1="162" x2="146.3" y2="188.5" stroke="#ff0000" stroke-width="6" stroke-linecap="round"/><line x1="165.0" y1="162" x2="165.0" y2="188.5" stroke="#ff0000" stroke-width="6" stroke-linecap="round"/><line x1="183.6" y1="162" x2="183.6" y2="188.5" stroke="#ff0000" stroke-width="6" stroke-linecap="round"/><line x1="202.3" y1="162" x2="202.3" y2="188.5" stroke="#ff0000" stroke-width="6" stroke-linecap="round"/><line x1="221.0" y1="162" x2="221.0" y2="188.5" stroke="#ff0000" stroke-width="6" stroke-linecap="round"/><line x1="239.6" y1="162" x2="239.6" y2="188.5" stroke="#ff0000" stroke-width="6" stroke-linecap="round"/><line x1="258.3" y1="162" x2="258.3" y2="188.5" stroke="#ff0000" stroke-width="6" stroke-linecap="round"/><line x1="276.9" y1="162" x2="276.9" y2="188.5" stroke="#ff0000" stroke-width="6" stroke-linecap="round"/><line x1="295.6" y1="162" x2="295.6" y2="188.5" stroke="#ff0000" stroke-width="6" stroke-linecap="round"/><line x1="314.3" y1="162" x2="314.3" y2="188.5" stroke="#ff0000" stroke-width="6" stroke-linecap="round"/><line x1="332.9" y1="162" x2="332.9" y2="188.5" stroke="#ff0000" stroke-width="6" stroke-linecap="round"/><line x1="351.6" y1="162" x2="351.6" y2="188.5" stroke="#ff0000" stroke-width="6" stroke-linecap="round"/><line x1="519.6" y1="162" x2="519.6" y2="188.5" stroke="#ff0000" stroke-width="6" stroke-linecap="round"/><line x1="538.2" y1="162" x2="538.2" y2="188.5" stroke="#ff0000" stroke-width="6" stroke-linecap="round"/><line x1="556.9" y1="162" x2="556.9" y2="188.5" stroke="#ff0000" stroke-width="6" stroke-linecap="round"/><line x1="575.5" y1="162" x2="575.5" y2="188.5" stroke="#ff0000" stroke-width="6" stroke-linecap="round"/><line x1="594.2" y1="162" x2="594.2" y2="188.5" stroke="#ff0000" stroke-width="6" stroke-linecap="round"/><line x1="612.9" y1="162" x2="612.9" y2="188.5" stroke="#ff0000" stroke-width="6" stroke-linecap="round"/><line x1="631.5" y1="162" x2="631.5" y2="188.5" stroke="#ff0000" stroke-width="6" stroke-linecap="round"/><line x1="650.2" y1="162" x2="650.2" y2="188.5" stroke="#ff0000" stroke-width="6" stroke-linecap="round"/><line x1="668.9" y1="162" x2="668.9" y2="188.5" stroke="#ff0000" stroke-width="6" stroke-linecap="round"/><line x1="687.5" y1="162" x2="687.5" y2="188.5" stroke="#ff0000" stroke-width="6" stroke-linecap="round"/><line x1="706.2" y1="162" x2="706.2" y2="188.5" stroke="#ff0000" stroke-width="6" stroke-linecap="round"/><line x1="724.8" y1="130" x2="724.8" y2="157" stroke="#33cc33" stroke-width="6" stroke-linecap="round"/><line x1="743.5" y1="130" x2="743.5" y2="157" stroke="#33cc33" stroke-width="6" stroke-linecap="round"/><line x1="762.2" y1="130" x2="762.2" y2="157" stroke="#33cc33" stroke-width="6" stroke-linecap="round"/><line x1="780.8" y1="130" x2="780.8" y2="157" stroke="#33cc33" stroke-width="6" stroke-linecap="round"/><line x1="799.5" y1="130" x2="799.5" y2="157" stroke="#33cc33" stroke-width="6" stroke-linecap="round"/><line x1="818.2" y1="130" x2="818.2" y2="157" stroke="#33cc33" stroke-width="6" stroke-linecap="round"/><line x1="836.8" y1="130" x2="836.8" y2="157" stroke="#33cc33" stroke-width="6" stroke-linecap="round"/><line x1="855.5" y1="162" x2="855.5" y2="188.5" stroke="#ff0000" stroke-width="6" stroke-linecap="round"/><line x1="874.1" y1="162" x2="874.1" y2="188.5" stroke="#ff0000" stroke-width="6" stroke-linecap="round"/><line x1="892.8" y1="162" x2="892.8" y2="188.5" stroke="#ff0000" stroke-width="6" stroke-linecap="round"/><line x1="911.5" y1="162" x2="911.5" y2="188.5" stroke="#ff0000" stroke-width="6" stroke-linecap="round"/><line x1="930.1" y1="162" x2="930.1" y2="188.5" stroke="#ff0000" stroke-width="6" stroke-linecap="round"/><line x1="948.8" y1="162" x2="948.8" y2="188.5" stroke="#ff0000" stroke-width="6" stroke-linecap="round"/><line x1="967.5" y1="162" x2="967.5" y2="188.5" stroke="#ff0000" stroke-width="6" stroke-linecap="round"/><line x1="986.1" y1="162" x2="986.1" y2="188.5" stroke="#ff0000" stroke-width="6" stroke-linecap="round"/><line x1="1004.8" y1="162" x2="1004.8" y2="188.5" stroke="#ff0000" stroke-width="6" stroke-linecap="round"/><line x1="1023.4" y1="162" x2="1023.4" y2="188.5" stroke="#ff0000" stroke-width="6" stroke-linecap="round"/><line x1="1042.1" y1="162" x2="1042.1" y2="188.5" stroke="#ff0000" stroke-width="6" stroke-linecap="round"/><line x1="1060.8" y1="162" x2="1060.8" y2="188.5" stroke="#ff0000" stroke-width="6" stroke-linecap="round"/><line x1="1079.4" y1="162" x2="1079.4" y2="188.5" stroke="#ff0000" stroke-width="6" stroke-linecap="round"/><line x1="1098.1" y1="162" x2="1098.1" y2="188.5" stroke="#ff0000" stroke-width="6" stroke-linecap="round"/><line x1="1116.8" y1="162" x2="1116.8" y2="188.5" stroke="#ff0000" stroke-width="6" stroke-linecap="round"/><line x1="1135.4" y1="162" x2="1135.4" y2="188.5" stroke="#ff0000" stroke-width="6" stroke-linecap="round"/><line x1="1154.1" y1="130" x2="1154.1" y2="157" stroke="#33cc33" stroke-width="6" stroke-linecap="round"/><line x1="1172.7" y1="130" x2="1172.7" y2="157" stroke="#33cc33" stroke-width="6" stroke-linecap="round"/><line x1="1191.4" y1="130" x2="1191.4" y2="157" stroke="#33cc33" stroke-width="6" stroke-linecap="round"/><line x1="1210.1" y1="130" x2="1210.1" y2="157" stroke="#33cc33" stroke-width="6" stroke-linecap="round"/><line x1="1228.7" y1="130" x2="1228.7" y2="157" stroke="#33cc33" stroke-width="6" stroke-linecap="round"/><line x1="1247.4" y1="130" x2="1247.4" y2="157" stroke="#33cc33" stroke-width="6" stroke-linecap="round"/><line x1="1266.1" y1="130" x2="1266.1" y2="157" stroke="#33cc33" stroke-width="6" stroke-linecap="round"/><line x1="1284.7" y1="162" x2="1284.7" y2="188.5" stroke="#ff0000" stroke-width="6" stroke-linecap="round"/><line x1="1303.4" y1="162" x2="1303.4" y2="188.5" stroke="#ff0000" stroke-width="6" stroke-linecap="round"/><line x1="1322.0" y1="162" x2="1322.0" y2="188.5" stroke="#ff0000" stroke-width="6" stroke-linecap="round"/><line x1="1340.7" y1="162" x2="1340.7" y2="188.5" stroke="#ff0000" stroke-width="6" stroke-linecap="round"/><line x1="1359.4" y1="162" x2="1359.4" y2="188.5" stroke="#ff0000" stroke-width="6" stroke-linecap="round"/><line x1="1378.0" y1="162" x2="1378.0" y2="188.5" stroke="#ff0000" stroke-width="6" stroke-linecap="round"/><line x1="1396.7" y1="162" x2="1396.7" y2="188.5" stroke="#ff0000" stroke-width="6" stroke-linecap="round"/><line x1="1415.4" y1="162" x2="1415.4" y2="188.5" stroke="#ff0000" stroke-width="6" stroke-linecap="round"/><line x1="1434.0" y1="162" x2="1434.0" y2="188.5" stroke="#ff0000" stroke-width="6" stroke-linecap="round"/><line x1="1452.7" y1="130" x2="1452.7" y2="157" stroke="#33cc33" stroke-width="6" stroke-linecap="round"/><line x1="1471.3" y1="130" x2="1471.3" y2="157" stroke="#33cc33" stroke-width="6" stroke-linecap="round"/><line x1="1490.0" y1="130" x2="1490.0" y2="157" stroke="#33cc33" stroke-width="6" stroke-linecap="round"/><line x1="1508.7" y1="162" x2="1508.7" y2="188.5" stroke="#ff0000" stroke-width="6" stroke-linecap="round"/><line x1="1527.3" y1="162" x2="1527.3" y2="188.5" stroke="#ff0000" stroke-width="6" stroke-linecap="round"/><line x1="1546.0" y1="162" x2="1546.0" y2="188.5" stroke="#ff0000" stroke-width="6" stroke-linecap="round"/><line x1="1564.7" y1="162" x2="1564.7" y2="188.5" stroke="#ff0000" stroke-width="6" stroke-linecap="round"/><line x1="1583.3" y1="162" x2="1583.3" y2="188.5" stroke="#ff0000" stroke-width="6" stroke-linecap="round"/><line x1="1602.0" y1="162" x2="1602.0" y2="188.5" stroke="#ff0000" stroke-width="6" stroke-linecap="round"/><line x1="1620.6" y1="162" x2="1620.6" y2="188.5" stroke="#ff0000" stroke-width="6" stroke-linecap="round"/><line x1="1639.3" y1="130" x2="1639.3" y2="157" stroke="#33cc33" stroke-width="6" stroke-linecap="round"/><line x1="44" y1="159.3" x2="1639.3" y2="159.3" stroke="#ffff00" stroke-width="6.5" stroke-linecap="round"/><line x1="1854.5" y1="124" x2="1854.5" y2="194" stroke="#f0f0f0" stroke-width="1.6"/><line x1="1854.5" y1="130" x2="1865.5" y2="130" stroke="#e8e8e8" stroke-width="1.8"/><line x1="1854.5" y1="143.7" x2="1859.5" y2="143.7" stroke="#e8e8e8" stroke-width="1.8"/><line x1="1854.5" y1="159.3" x2="1865.5" y2="159.3" stroke="#e8e8e8" stroke-width="1.8"/><line x1="1854.5" y1="174.5" x2="1859.5" y2="174.5" stroke="#e8e8e8" stroke-width="1.8"/><line x1="1854.5" y1="188" x2="1865.5" y2="188" stroke="#e8e8e8" stroke-width="1.8"/></svg>
<div class="t " style="left:1903.7px;top:154.15px;font-size:14px;color:#f2f2f2;;transform:scaleX(1.0645);transform-origin:0 0">0</div>
<div style="position:absolute;left:44px;top:226px;width:1873px;height:94px;background:#00005e"></div>
<div style="position:absolute;left:44px;top:226px;width:1873px;height:1px;background:#4a4a4a"></div>
<svg style="left:44px;top:226px;overflow:hidden" width="1873" height="94" viewBox="44 226 1873 94"><line x1="44" y1="272" x2="1639.3" y2="272" stroke="#ff7a28" stroke-width="1.3"/><line x1="44" y1="271.2" x2="147" y2="271.2" stroke="#ff7a28" stroke-width="2"/><line x1="595" y1="271.2" x2="612" y2="271.2" stroke="#ff7a28" stroke-width="2"/><line x1="650" y1="271.2" x2="838" y2="271.2" stroke="#ff7a28" stroke-width="2"/><line x1="1097" y1="271.2" x2="1265" y2="271.2" stroke="#ff7a28" stroke-width="2"/><line x1="1414" y1="271.2" x2="1490" y2="271.2" stroke="#ff7a28" stroke-width="2"/><line x1="1619" y1="271.2" x2="1639" y2="271.2" stroke="#ff7a28" stroke-width="2"/><polyline points="44.0,274.3 146.3,274.3 165.0,293.0 183.6,274.3 351.6,274.3 370.3,247.6 388.9,247.6 407.6,274.3 500.9,274.3 519.6,293.0 538.2,274.3 612.9,274.3 631.5,293.0 650.2,274.3 668.9,293.0 687.5,274.3 1004.8,274.3 1023.4,293.0 1042.1,274.3 1228.7,274.3 1247.4,254.7 1266.1,274.3 1639.3,274.3" fill="none" stroke="#96d2e8" stroke-width="3.2" stroke-linejoin="miter"/><polyline points="44.0,312.3 706.2,312.3 724.8,233.7 836.8,233.7 855.5,312.3 1135.4,312.3 1154.1,233.7 1266.1,233.7 1284.7,312.3 1434.0,312.3 1452.7,233.7 1490.0,233.7 1508.7,312.3 1620.6,312.3 1639.3,233.7" fill="none" stroke="#96d2e8" stroke-width="4.5" stroke-linejoin="miter"/><line x1="1639.3" y1="274.3" x2="1854.5" y2="274.3" stroke="#f0f0f0" stroke-width="1.4"/><line x1="1854.5" y1="226" x2="1854.5" y2="320" stroke="#f0f0f0" stroke-width="1.6"/><line x1="1854.5" y1="234.5" x2="1859.5" y2="234.5" stroke="#e8e8e8" stroke-width="1.8"/><line x1="1854.5" y1="248" x2="1865.5" y2="248" stroke="#e8e8e8" stroke-width="1.8"/><line x1="1854.5" y1="260.75" x2="1859.5" y2="260.75" stroke="#e8e8e8" stroke-width="1.8"/><line x1="1854.5" y1="274.25" x2="1865.5" y2="274.25" stroke="#e8e8e8" stroke-width="1.8"/><line x1="1854.5" y1="287" x2="1859.5" y2="287" stroke="#e8e8e8" stroke-width="1.8"/><line x1="1854.5" y1="299.5" x2="1865.5" y2="299.5" stroke="#e8e8e8" stroke-width="1.8"/><line x1="1854.5" y1="312.5" x2="1859.5" y2="312.5" stroke="#e8e8e8" stroke-width="1.8"/></svg>
<div class="t " style="left:1878.75px;top:243.35px;font-size:14px;color:#f2f2f2;;transform:scaleX(1.0672);transform-origin:0 0">1000</div>
<div class="t " style="left:1903.7px;top:269.15px;font-size:14px;color:#f2f2f2;;transform:scaleX(1.0645);transform-origin:0 0">0</div>
<div class="t " style="left:1872.5px;top:294.35px;font-size:14px;color:#f2f2f2;;transform:scaleX(1.1030);transform-origin:0 0">-1000</div>
<div style="position:absolute;left:44px;top:353px;width:1873px;height:141px;background:#808080"></div>
<div style="position:absolute;left:44px;top:353px;width:1873px;height:1px;background:#4a4a4a"></div>
<svg style="left:44px;top:353px;overflow:hidden" width="1873" height="141" viewBox="44 353 1873 141"><line x1="44" y1="386.9" x2="1854.5" y2="386.9" stroke="#111" stroke-width="1.6" stroke-dasharray="4 4"/><line x1="44" y1="415.6" x2="1854.5" y2="415.6" stroke="#111" stroke-width="1.6" stroke-dasharray="4 4"/><line x1="44" y1="445.4" x2="1854.5" y2="445.4" stroke="#111" stroke-width="1.6" stroke-dasharray="4 4"/><line x1="44" y1="474.4" x2="1854.5" y2="474.4" stroke="#111" stroke-width="1.6" stroke-dasharray="4 4"/><polyline points="44.0,430.0 55.6,431.2 71.2,436.5 88.0,431.2 96.2,431.7 125.4,437.0 140.0,432.3 152.5,428.8 164.0,424.0 204.6,424.0 220.2,428.0 237.0,424.0 335.8,424.0 350.4,428.0 371.2,428.0 383.8,432.3 408.8,433.3 425.4,437.0 440.0,437.0 471.7,433.3 505.0,431.9 542.5,430.2 565.4,431.2 594.6,436.5 611.2,432.3 630.0,428.8 646.7,432.3 692.5,431.7 721.7,435.4 746.7,435.4 759.2,431.2 780.0,424.0 895.0,424.0 903.3,427.1 933.5,428.1 953.3,431.7 965.8,433.3 1003.3,432.9 1011.7,430.8 1020.0,428.1 1061.7,428.1 1078.3,424.0 1086.7,428.1 1097.0,436.5 1155.4,436.5 1174.0,433.3 1190.8,428.1 1215.8,428.1 1233.4,432.0 1247.5,433.2 1264.0,424.5 1360.0,424.5 1369.4,428.5 1395.1,433.2 1437.3,433.2 1453.7,437.2 1477.2,430.9 1507.6,427.8 1526.4,424.5 1547.5,430.9 1568.6,427.3 1587.3,432.0 1608.4,433.2 1639.0,437.2" fill="none" stroke="#e6e600" stroke-width="1.4"/><polyline points="44.0,445.0 71.2,439.2 140.0,432.3 146.2,431.9 200.4,445.8 219.2,446.9 258.8,465.6 279.6,471.9 331.7,481.9 371.2,479.2 410.8,458.3 440.0,441.7 446.7,438.5 461.2,433.3 544.6,433.3 575.8,428.1 596.7,422.5 613.3,424.0 630.0,428.1 700.8,425.0 721.7,421.9 742.5,414.2 759.2,416.2 784.2,428.1 805.0,435.4 830.0,439.6 845.0,443.3 882.5,460.4 893.0,462.1 920.0,462.1 945.0,458.3 1005.4,441.7 1028.3,444.8 1078.3,452.1 1107.5,443.8 1140.8,430.2 1155.4,421.9 1192.9,428.1 1240.5,427.3 1259.2,427.3 1287.3,440.2 1339.0,474.2 1360.0,482.4 1378.7,476.6 1413.9,447.3 1432.6,441.4 1456.0,428.5 1472.5,425.5 1491.2,427.3 1526.4,448.0 1549.8,448.4 1568.6,446.1 1596.7,442.6 1622.5,433.2 1639.0,425.5" fill="none" stroke="#ece8cc" stroke-width="1.4"/><polyline points="44.0,429.6 332.9,429.6 351.6,401.0 370.3,429.6 538.2,429.6 556.9,423.0 575.5,429.6 594.2,429.6 612.9,437.5 631.5,429.6 743.5,429.6 762.2,437.5 780.8,429.6 892.8,429.6 911.5,403.0 930.1,429.6 1154.1,429.6 1172.7,437.5 1191.4,429.6 1359.4,429.6 1378.0,403.4 1396.7,429.6 1527.3,429.6 1546.0,422.7 1564.7,429.6 1639.3,429.6" fill="none" stroke="#000" stroke-width="2.3"/><polyline points="44.0,401.7 332.9,401.7 351.6,373.0 538.2,373.0 556.9,365.0 594.2,365.0 612.9,438.0 743.5,438.0 762.2,445.6 892.8,445.6 911.5,401.7 1154.1,401.7 1172.7,438.0 1359.4,438.0 1378.0,401.7 1527.3,401.7 1546.0,394.0 1639.3,394.0" fill="none" stroke="#8b0000" stroke-width="4.2"/><line x1="1854.5" y1="353" x2="1854.5" y2="494" stroke="#f0f0f0" stroke-width="1.6"/><line x1="1854.5" y1="358" x2="1865.5" y2="358" stroke="#e8e8e8" stroke-width="1.8"/><line x1="1854.5" y1="373" x2="1859.5" y2="373" stroke="#e8e8e8" stroke-width="1.8"/><line x1="1854.5" y1="387" x2="1859.5" y2="387" stroke="#e8e8e8" stroke-width="1.8"/><line x1="1854.5" y1="401.75" x2="1859.5" y2="401.75" stroke="#e8e8e8" stroke-width="1.8"/><line x1="1854.5" y1="415.5" x2="1859.5" y2="415.5" stroke="#e8e8e8" stroke-width="1.8"/><line x1="1854.5" y1="430.5" x2="1865.5" y2="430.5" stroke="#e8e8e8" stroke-width="1.8"/><line x1="1854.5" y1="445.5" x2="1859.5" y2="445.5" stroke="#e8e8e8" stroke-width="1.8"/><line x1="1854.5" y1="459.25" x2="1859.5" y2="459.25" stroke="#e8e8e8" stroke-width="1.8"/><line x1="1854.5" y1="474.25" x2="1859.5" y2="474.25" stroke="#e8e8e8" stroke-width="1.8"/><line x1="1854.5" y1="490.5" x2="1859.5" y2="490.5" stroke="#e8e8e8" stroke-width="1.8"/></svg>
<div class="t " style="left:1903.7px;top:425.65px;font-size:14px;color:#f2f2f2;;transform:scaleX(1.0645);transform-origin:0 0">0</div>
<div style="position:absolute;left:44px;top:527px;width:1873px;height:354px;background:#000"></div>
<div style="position:absolute;left:44px;top:527px;width:1873px;height:1px;background:#4a4a4a"></div>
<svg style="left:44px;top:527px;overflow:hidden" width="1873" height="354" viewBox="44 527 1873 354"><line x1="53.0" y1="569.6" x2="53.0" y2="584.0" stroke="#8ea6c2" stroke-width="1.7"/><line x1="53.0" y1="588.5" x2="53.0" y2="588.5" stroke="#8ea6c2" stroke-width="1.7"/><rect x="46.0" y="584.8" width="14.0" height="2.9" fill="none" stroke="#8ea6c2" stroke-width="1.6"/><line x1="71.7" y1="562.0" x2="71.7" y2="573.0" stroke="#8ea6c2" stroke-width="1.7"/><line x1="71.7" y1="584.4" x2="71.7" y2="599.0" stroke="#8ea6c2" stroke-width="1.7"/><rect x="64.7" y="573.8" width="14.0" height="9.8" fill="none" stroke="#8ea6c2" stroke-width="1.6"/><line x1="90.3" y1="568.7" x2="90.3" y2="595.2" stroke="#ff6a21" stroke-width="1.8"/><rect x="82.5" y="572.4" width="15.6" height="11.1" fill="#ff6a21"/><line x1="109.0" y1="571.0" x2="109.0" y2="576.5" stroke="#8ea6c2" stroke-width="1.7"/><line x1="109.0" y1="584.4" x2="109.0" y2="587.2" stroke="#8ea6c2" stroke-width="1.7"/><rect x="102.0" y="577.3" width="14.0" height="6.3" fill="none" stroke="#8ea6c2" stroke-width="1.6"/><line x1="127.6" y1="559.4" x2="127.6" y2="567.8" stroke="#8ea6c2" stroke-width="1.7"/><line x1="127.6" y1="577.0" x2="127.6" y2="577.0" stroke="#8ea6c2" stroke-width="1.7"/><rect x="120.6" y="568.6" width="14.0" height="7.6" fill="none" stroke="#8ea6c2" stroke-width="1.6"/><line x1="146.3" y1="562.2" x2="146.3" y2="589.6" stroke="#ff6a21" stroke-width="1.8"/><rect x="138.5" y="567.4" width="15.6" height="17.4" fill="#ff6a21"/><line x1="165.0" y1="581.0" x2="165.0" y2="606.0" stroke="#ff6a21" stroke-width="1.8"/><rect x="157.2" y="586.0" width="15.6" height="20.0" fill="#ff6a21"/><line x1="183.6" y1="593.7" x2="183.6" y2="595.0" stroke="#8ea6c2" stroke-width="1.7"/><line x1="183.6" y1="606.7" x2="183.6" y2="621.0" stroke="#8ea6c2" stroke-width="1.7"/><rect x="176.6" y="595.8" width="14.0" height="10.1" fill="none" stroke="#8ea6c2" stroke-width="1.6"/><line x1="202.3" y1="594.0" x2="202.3" y2="626.0" stroke="#ff6a21" stroke-width="1.8"/><rect x="194.5" y="595.0" width="15.6" height="13.5" fill="#ff6a21"/><line x1="221.0" y1="600.0" x2="221.0" y2="612.0" stroke="#ff6a21" stroke-width="1.8"/><line x1="213.2" y1="610.4" x2="228.8" y2="610.4" stroke="#ff6a21" stroke-width="1.8"/><line x1="239.6" y1="603.9" x2="239.6" y2="661.1" stroke="#ff6a21" stroke-width="1.8"/><rect x="231.8" y="612.2" width="15.6" height="40.0" fill="#ff6a21"/><line x1="258.3" y1="649.0" x2="258.3" y2="680.0" stroke="#ff6a21" stroke-width="1.8"/><rect x="250.5" y="652.4" width="15.6" height="22.0" fill="#ff6a21"/><line x1="276.9" y1="663.7" x2="276.9" y2="684.6" stroke="#ff6a21" stroke-width="1.8"/><rect x="269.1" y="674.9" width="15.6" height="4.7" fill="#ff6a21"/><line x1="295.6" y1="671.3" x2="295.6" y2="674.0" stroke="#8ea6c2" stroke-width="1.7"/><line x1="295.6" y1="680.7" x2="295.6" y2="703.5" stroke="#8ea6c2" stroke-width="1.7"/><rect x="288.6" y="674.8" width="14.0" height="5.1" fill="none" stroke="#8ea6c2" stroke-width="1.6"/><line x1="314.3" y1="674.0" x2="314.3" y2="713.4" stroke="#ff6a21" stroke-width="1.8"/><rect x="306.5" y="676.3" width="15.6" height="35.9" fill="#ff6a21"/><line x1="332.9" y1="702.4" x2="332.9" y2="722.4" stroke="#ff6a21" stroke-width="1.8"/><line x1="325.1" y1="711.4" x2="340.7" y2="711.4" stroke="#ff6a21" stroke-width="1.8"/><line x1="351.6" y1="690.0" x2="351.6" y2="706.4" stroke="#8ea6c2" stroke-width="1.7"/><line x1="351.6" y1="713.4" x2="351.6" y2="722.4" stroke="#8ea6c2" stroke-width="1.7"/><rect x="344.6" y="707.2" width="14.0" height="5.4" fill="none" stroke="#8ea6c2" stroke-width="1.6"/><line x1="370.3" y1="706.0" x2="370.3" y2="734.2" stroke="#ff6a21" stroke-width="1.8"/><rect x="362.5" y="705.9" width="15.6" height="11.1" fill="#ff6a21"/><line x1="388.9" y1="696.4" x2="388.9" y2="699.0" stroke="#8ea6c2" stroke-width="1.7"/><line x1="388.9" y1="718.2" x2="388.9" y2="720.8" stroke="#8ea6c2" stroke-width="1.7"/><rect x="381.9" y="699.8" width="14.0" height="17.6" fill="none" stroke="#8ea6c2" stroke-width="1.6"/><line x1="407.6" y1="669.0" x2="407.6" y2="685.4" stroke="#8ea6c2" stroke-width="1.7"/><line x1="407.6" y1="700.8" x2="407.6" y2="702.0" stroke="#8ea6c2" stroke-width="1.7"/><rect x="400.6" y="686.2" width="14.0" height="13.8" fill="none" stroke="#8ea6c2" stroke-width="1.6"/><line x1="426.2" y1="651.25" x2="426.2" y2="662.7" stroke="#8ea6c2" stroke-width="1.7"/><line x1="426.2" y1="685.6" x2="426.2" y2="690.8" stroke="#8ea6c2" stroke-width="1.7"/><rect x="419.2" y="663.5" width="14.0" height="21.3" fill="none" stroke="#8ea6c2" stroke-width="1.6"/><line x1="444.9" y1="650.2" x2="444.9" y2="681.5" stroke="#ff6a21" stroke-width="1.8"/><rect x="437.1" y="662.5" width="15.6" height="12.2" fill="#ff6a21"/><line x1="463.6" y1="648.6" x2="463.6" y2="662.7" stroke="#8ea6c2" stroke-width="1.7"/><line x1="463.6" y1="677.0" x2="463.6" y2="682.5" stroke="#8ea6c2" stroke-width="1.7"/><rect x="456.6" y="663.5" width="14.0" height="12.7" fill="none" stroke="#8ea6c2" stroke-width="1.6"/><line x1="482.2" y1="656.0" x2="482.2" y2="688.75" stroke="#ff6a21" stroke-width="1.8"/><line x1="474.4" y1="664.0" x2="490.0" y2="664.0" stroke="#ff6a21" stroke-width="1.8"/><line x1="500.9" y1="653.3" x2="500.9" y2="664.3" stroke="#8ea6c2" stroke-width="1.7"/><line x1="500.9" y1="667.4" x2="500.9" y2="673.6" stroke="#8ea6c2" stroke-width="1.7"/><rect x="493.9" y="665.1" width="14.0" height="1.6" fill="none" stroke="#8ea6c2" stroke-width="1.6"/><line x1="519.6" y1="656.5" x2="519.6" y2="693.4" stroke="#ff6a21" stroke-width="1.8"/><rect x="511.8" y="665.0" width="15.6" height="26.9" fill="#ff6a21"/><line x1="538.2" y1="663.75" x2="538.2" y2="669.5" stroke="#8ea6c2" stroke-width="1.7"/><line x1="538.2" y1="691.9" x2="538.2" y2="697.0" stroke="#8ea6c2" stroke-width="1.7"/><rect x="531.2" y="670.3" width="14.0" height="20.8" fill="none" stroke="#8ea6c2" stroke-width="1.6"/><line x1="556.9" y1="660.0" x2="556.9" y2="691.9" stroke="#ff6a21" stroke-width="1.8"/><line x1="549.1" y1="669.0" x2="564.7" y2="669.0" stroke="#ff6a21" stroke-width="1.8"/><line x1="575.5" y1="655.4" x2="575.5" y2="665.3" stroke="#8ea6c2" stroke-width="1.7"/><line x1="575.5" y1="672.0" x2="575.5" y2="683.5" stroke="#8ea6c2" stroke-width="1.7"/><rect x="568.5" y="666.1" width="14.0" height="5.1" fill="none" stroke="#8ea6c2" stroke-width="1.6"/><line x1="594.2" y1="650.2" x2="594.2" y2="653.9" stroke="#8ea6c2" stroke-width="1.7"/><line x1="594.2" y1="665.8" x2="594.2" y2="668.4" stroke="#8ea6c2" stroke-width="1.7"/><rect x="587.2" y="654.7" width="14.0" height="10.3" fill="none" stroke="#8ea6c2" stroke-width="1.6"/><line x1="612.9" y1="645.2" x2="612.9" y2="679.6" stroke="#ff6a21" stroke-width="1.8"/><rect x="605.1" y="654.0" width="15.6" height="24.5" fill="#ff6a21"/><line x1="631.5" y1="667.6" x2="631.5" y2="689.5" stroke="#ff6a21" stroke-width="1.8"/><line x1="623.7" y1="678.0" x2="639.3" y2="678.0" stroke="#ff6a21" stroke-width="1.8"/><line x1="650.2" y1="655.1" x2="650.2" y2="657.7" stroke="#8ea6c2" stroke-width="1.7"/><line x1="650.2" y1="680.6" x2="650.2" y2="680.6" stroke="#8ea6c2" stroke-width="1.7"/><rect x="643.2" y="658.5" width="14.0" height="21.3" fill="none" stroke="#8ea6c2" stroke-width="1.6"/><line x1="668.9" y1="655.0" x2="668.9" y2="684.8" stroke="#ff6a21" stroke-width="1.8"/><rect x="661.1" y="657.2" width="15.6" height="17.7" fill="#ff6a21"/><line x1="687.5" y1="663.4" x2="687.5" y2="671.8" stroke="#8ea6c2" stroke-width="1.7"/><line x1="687.5" y1="675.4" x2="687.5" y2="680.0" stroke="#8ea6c2" stroke-width="1.7"/><rect x="680.5" y="672.6" width="14.0" height="2.0" fill="none" stroke="#8ea6c2" stroke-width="1.6"/><line x1="706.2" y1="657.7" x2="706.2" y2="666.6" stroke="#8ea6c2" stroke-width="1.7"/><line x1="706.2" y1="670.7" x2="706.2" y2="672.3" stroke="#8ea6c2" stroke-width="1.7"/><rect x="699.2" y="667.4" width="14.0" height="2.5" fill="none" stroke="#8ea6c2" stroke-width="1.6"/><line x1="724.8" y1="625.4" x2="724.8" y2="644.2" stroke="#8ea6c2" stroke-width="1.7"/><line x1="724.8" y1="667.0" x2="724.8" y2="669.7" stroke="#8ea6c2" stroke-width="1.7"/><rect x="717.8" y="645.0" width="14.0" height="21.2" fill="none" stroke="#8ea6c2" stroke-width="1.6"/><line x1="743.5" y1="625.4" x2="743.5" y2="639.5" stroke="#8ea6c2" stroke-width="1.7"/><line x1="743.5" y1="644.7" x2="743.5" y2="649.4" stroke="#8ea6c2" stroke-width="1.7"/><rect x="736.5" y="640.3" width="14.0" height="3.6" fill="none" stroke="#8ea6c2" stroke-width="1.6"/><line x1="762.2" y1="636.4" x2="762.2" y2="659.8" stroke="#ff6a21" stroke-width="1.8"/><rect x="754.4" y="639.0" width="15.6" height="14.5" fill="#ff6a21"/><line x1="780.8" y1="651.5" x2="780.8" y2="681.0" stroke="#ff6a21" stroke-width="1.8"/><rect x="773.0" y="654.0" width="15.6" height="26.0" fill="#ff6a21"/><line x1="799.5" y1="672.8" x2="799.5" y2="677.8" stroke="#8ea6c2" stroke-width="1.7"/><line x1="799.5" y1="680.8" x2="799.5" y2="690.0" stroke="#8ea6c2" stroke-width="1.7"/><rect x="792.5" y="678.6" width="14.0" height="1.6" fill="none" stroke="#8ea6c2" stroke-width="1.6"/><line x1="818.2" y1="668.3" x2="818.2" y2="675.2" stroke="#8ea6c2" stroke-width="1.7"/><line x1="818.2" y1="678.6" x2="818.2" y2="683.3" stroke="#8ea6c2" stroke-width="1.7"/><rect x="811.2" y="676.0" width="14.0" height="1.8" fill="none" stroke="#8ea6c2" stroke-width="1.6"/><line x1="836.8" y1="671.0" x2="836.8" y2="700.8" stroke="#ff6a21" stroke-width="1.8"/><rect x="829.0" y="675.0" width="15.6" height="23.9" fill="#ff6a21"/><line x1="855.5" y1="697.4" x2="855.5" y2="713.6" stroke="#ff6a21" stroke-width="1.8"/><rect x="847.7" y="698.9" width="15.6" height="14.7" fill="#ff6a21"/><line x1="874.1" y1="710.0" x2="874.1" y2="742.8" stroke="#ff6a21" stroke-width="1.8"/><rect x="866.3" y="712.4" width="15.6" height="25.0" fill="#ff6a21"/><line x1="892.8" y1="717.4" x2="892.8" y2="731.4" stroke="#8ea6c2" stroke-width="1.7"/><line x1="892.8" y1="738.6" x2="892.8" y2="748.9" stroke="#8ea6c2" stroke-width="1.7"/><rect x="885.8" y="732.2" width="14.0" height="5.6" fill="none" stroke="#8ea6c2" stroke-width="1.6"/><line x1="911.5" y1="721.7" x2="911.5" y2="746.0" stroke="#ff6a21" stroke-width="1.8"/><line x1="903.7" y1="730.6" x2="919.3" y2="730.6" stroke="#ff6a21" stroke-width="1.8"/><line x1="930.1" y1="713.9" x2="930.1" y2="729.2" stroke="#8ea6c2" stroke-width="1.7"/><line x1="930.1" y1="732.2" x2="930.1" y2="736.0" stroke="#8ea6c2" stroke-width="1.7"/><rect x="923.1" y="730.0" width="14.0" height="1.6" fill="none" stroke="#8ea6c2" stroke-width="1.6"/><line x1="948.8" y1="698.9" x2="948.8" y2="736.0" stroke="#ff6a21" stroke-width="1.8"/><line x1="941.0" y1="731.0" x2="956.6" y2="731.0" stroke="#ff6a21" stroke-width="1.8"/><line x1="967.5" y1="715.6" x2="967.5" y2="724.4" stroke="#8ea6c2" stroke-width="1.7"/><line x1="967.5" y1="730.8" x2="967.5" y2="744.8" stroke="#8ea6c2" stroke-width="1.7"/><rect x="960.5" y="725.2" width="14.0" height="4.8" fill="none" stroke="#8ea6c2" stroke-width="1.6"/><line x1="986.1" y1="707.5" x2="986.1" y2="719.3" stroke="#8ea6c2" stroke-width="1.7"/><line x1="986.1" y1="724.4" x2="986.1" y2="727.2" stroke="#8ea6c2" stroke-width="1.7"/><rect x="979.1" y="720.1" width="14.0" height="3.5" fill="none" stroke="#8ea6c2" stroke-width="1.6"/><line x1="1004.8" y1="701.4" x2="1004.8" y2="708.1" stroke="#8ea6c2" stroke-width="1.7"/><line x1="1004.8" y1="719.2" x2="1004.8" y2="729.4" stroke="#8ea6c2" stroke-width="1.7"/><rect x="997.8" y="708.9" width="14.0" height="9.5" fill="none" stroke="#8ea6c2" stroke-width="1.6"/><line x1="1023.4" y1="707.8" x2="1023.4" y2="746.1" stroke="#ff6a21" stroke-width="1.8"/><rect x="1015.6" y="709.1" width="15.6" height="28.1" fill="#ff6a21"/><line x1="1042.1" y1="713.9" x2="1042.1" y2="735.2" stroke="#8ea6c2" stroke-width="1.7"/><line x1="1042.1" y1="738.3" x2="1042.1" y2="738.3" stroke="#8ea6c2" stroke-width="1.7"/><rect x="1035.1" y="736.0" width="14.0" height="1.6" fill="none" stroke="#8ea6c2" stroke-width="1.6"/><line x1="1060.8" y1="735.9" x2="1060.8" y2="754.4" stroke="#ff6a21" stroke-width="1.8"/><rect x="1053.0" y="736.7" width="15.6" height="3.9" fill="#ff6a21"/><line x1="1079.4" y1="726.1" x2="1079.4" y2="758.3" stroke="#ff6a21" stroke-width="1.8"/><rect x="1071.6" y="742.8" width="15.6" height="5.5" fill="#ff6a21"/><line x1="1098.1" y1="720.6" x2="1098.1" y2="722.8" stroke="#8ea6c2" stroke-width="1.7"/><line x1="1098.1" y1="749.4" x2="1098.1" y2="755.0" stroke="#8ea6c2" stroke-width="1.7"/><rect x="1091.1" y="723.6" width="14.0" height="25.0" fill="none" stroke="#8ea6c2" stroke-width="1.6"/><line x1="1116.8" y1="715.6" x2="1116.8" y2="740.6" stroke="#ff6a21" stroke-width="1.8"/><line x1="1109.0" y1="723.0" x2="1124.6" y2="723.0" stroke="#ff6a21" stroke-width="1.8"/><line x1="1135.4" y1="692.8" x2="1135.4" y2="712.8" stroke="#8ea6c2" stroke-width="1.7"/><line x1="1135.4" y1="724.8" x2="1135.4" y2="724.8" stroke="#8ea6c2" stroke-width="1.7"/><rect x="1128.4" y="713.6" width="14.0" height="10.4" fill="none" stroke="#8ea6c2" stroke-width="1.6"/><line x1="1154.1" y1="670.0" x2="1154.1" y2="691.4" stroke="#8ea6c2" stroke-width="1.7"/><line x1="1154.1" y1="702.2" x2="1154.1" y2="707.2" stroke="#8ea6c2" stroke-width="1.7"/><rect x="1147.1" y="692.2" width="14.0" height="9.2" fill="none" stroke="#8ea6c2" stroke-width="1.6"/><line x1="1172.7" y1="672.2" x2="1172.7" y2="731.1" stroke="#ff6a21" stroke-width="1.8"/><rect x="1164.9" y="690.3" width="15.6" height="39.2" fill="#ff6a21"/><line x1="1191.4" y1="716.7" x2="1191.4" y2="729.0" stroke="#8ea6c2" stroke-width="1.7"/><line x1="1191.4" y1="732.5" x2="1191.4" y2="734.8" stroke="#8ea6c2" stroke-width="1.7"/><rect x="1184.4" y="729.8" width="14.0" height="1.9" fill="none" stroke="#8ea6c2" stroke-width="1.6"/><line x1="1210.1" y1="717.5" x2="1210.1" y2="722.7" stroke="#8ea6c2" stroke-width="1.7"/><line x1="1210.1" y1="728.6" x2="1210.1" y2="734.0" stroke="#8ea6c2" stroke-width="1.7"/><rect x="1203.1" y="723.5" width="14.0" height="4.3" fill="none" stroke="#8ea6c2" stroke-width="1.6"/><line x1="1228.7" y1="712.8" x2="1228.7" y2="719.0" stroke="#8ea6c2" stroke-width="1.7"/><line x1="1228.7" y1="723.4" x2="1228.7" y2="737.2" stroke="#8ea6c2" stroke-width="1.7"/><rect x="1221.7" y="719.8" width="14.0" height="2.8" fill="none" stroke="#8ea6c2" stroke-width="1.6"/><line x1="1247.4" y1="715.2" x2="1247.4" y2="716.7" stroke="#8ea6c2" stroke-width="1.7"/><line x1="1247.4" y1="720.7" x2="1247.4" y2="731.2" stroke="#8ea6c2" stroke-width="1.7"/><rect x="1240.4" y="717.5" width="14.0" height="2.4" fill="none" stroke="#8ea6c2" stroke-width="1.6"/><line x1="1266.1" y1="708.9" x2="1266.1" y2="734.8" stroke="#ff6a21" stroke-width="1.8"/><rect x="1258.3" y="716.4" width="15.6" height="13.3" fill="#ff6a21"/><line x1="1284.7" y1="728.6" x2="1284.7" y2="771.8" stroke="#ff6a21" stroke-width="1.8"/><rect x="1276.9" y="730.0" width="15.6" height="34.7" fill="#ff6a21"/><line x1="1303.4" y1="747.4" x2="1303.4" y2="773.4" stroke="#ff6a21" stroke-width="1.8"/><line x1="1295.6" y1="765.5" x2="1311.2" y2="765.5" stroke="#ff6a21" stroke-width="1.8"/><line x1="1322.0" y1="761.6" x2="1322.0" y2="811.2" stroke="#ff6a21" stroke-width="1.8"/><rect x="1314.2" y="766.3" width="15.6" height="37.0" fill="#ff6a21"/><line x1="1340.7" y1="798.6" x2="1340.7" y2="837.1" stroke="#ff6a21" stroke-width="1.8"/><rect x="1332.9" y="807.2" width="15.6" height="18.8" fill="#ff6a21"/><line x1="1359.4" y1="810.4" x2="1359.4" y2="835.6" stroke="#ff6a21" stroke-width="1.8"/><line x1="1351.6" y1="828.0" x2="1367.2" y2="828.0" stroke="#ff6a21" stroke-width="1.8"/><line x1="1378.0" y1="789.1" x2="1378.0" y2="793.0" stroke="#8ea6c2" stroke-width="1.7"/><line x1="1378.0" y1="830.5" x2="1378.0" y2="845.0" stroke="#8ea6c2" stroke-width="1.7"/><rect x="1371.0" y="793.8" width="14.0" height="35.9" fill="none" stroke="#8ea6c2" stroke-width="1.6"/><line x1="1396.7" y1="771.8" x2="1396.7" y2="771.8" stroke="#8ea6c2" stroke-width="1.7"/><line x1="1396.7" y1="793.4" x2="1396.7" y2="818.7" stroke="#8ea6c2" stroke-width="1.7"/><rect x="1389.7" y="772.6" width="14.0" height="20.0" fill="none" stroke="#8ea6c2" stroke-width="1.6"/><line x1="1415.4" y1="761.6" x2="1415.4" y2="792.3" stroke="#ff6a21" stroke-width="1.8"/><line x1="1407.6" y1="773.0" x2="1423.2" y2="773.0" stroke="#ff6a21" stroke-width="1.8"/><line x1="1434.0" y1="764.0" x2="1434.0" y2="769.5" stroke="#8ea6c2" stroke-width="1.7"/><line x1="1434.0" y1="777.0" x2="1434.0" y2="788.8" stroke="#8ea6c2" stroke-width="1.7"/><rect x="1427.0" y="770.3" width="14.0" height="5.9" fill="none" stroke="#8ea6c2" stroke-width="1.6"/><line x1="1452.7" y1="722.3" x2="1452.7" y2="726.7" stroke="#8ea6c2" stroke-width="1.7"/><line x1="1452.7" y1="769.8" x2="1452.7" y2="773.4" stroke="#8ea6c2" stroke-width="1.7"/><rect x="1445.7" y="727.5" width="14.0" height="41.5" fill="none" stroke="#8ea6c2" stroke-width="1.6"/><line x1="1471.3" y1="723.8" x2="1471.3" y2="765.5" stroke="#ff6a21" stroke-width="1.8"/><rect x="1463.5" y="726.2" width="15.6" height="27.5" fill="#ff6a21"/><line x1="1490.0" y1="741.1" x2="1490.0" y2="778.4" stroke="#ff6a21" stroke-width="1.8"/><rect x="1482.2" y="754.8" width="15.6" height="23.6" fill="#ff6a21"/><line x1="1508.7" y1="777.3" x2="1508.7" y2="790.7" stroke="#ff6a21" stroke-width="1.8"/><rect x="1500.9" y="777.3" width="15.6" height="13.4" fill="#ff6a21"/><line x1="1527.3" y1="787.6" x2="1527.3" y2="807.2" stroke="#ff6a21" stroke-width="1.8"/><rect x="1519.5" y="792.3" width="15.6" height="8.7" fill="#ff6a21"/><line x1="1546.0" y1="782.6" x2="1546.0" y2="808.5" stroke="#8ea6c2" stroke-width="1.7"/><line x1="1538.2" y1="802.0" x2="1553.8" y2="802.0" stroke="#8ea6c2" stroke-width="1.7"/><line x1="1564.7" y1="792.8" x2="1564.7" y2="811.3" stroke="#8ea6c2" stroke-width="1.7"/><line x1="1556.9" y1="799.0" x2="1572.5" y2="799.0" stroke="#8ea6c2" stroke-width="1.7"/><line x1="1583.3" y1="774.3" x2="1583.3" y2="783.0" stroke="#8ea6c2" stroke-width="1.7"/><line x1="1583.3" y1="802.0" x2="1583.3" y2="819.6" stroke="#8ea6c2" stroke-width="1.7"/><rect x="1576.3" y="783.8" width="14.0" height="17.4" fill="none" stroke="#8ea6c2" stroke-width="1.6"/><line x1="1602.0" y1="772.4" x2="1602.0" y2="799.6" stroke="#ff6a21" stroke-width="1.8"/><rect x="1594.2" y="781.0" width="15.6" height="15.0" fill="#ff6a21"/><line x1="1620.6" y1="761.3" x2="1620.6" y2="765.0" stroke="#8ea6c2" stroke-width="1.7"/><line x1="1620.6" y1="795.6" x2="1620.6" y2="797.4" stroke="#8ea6c2" stroke-width="1.7"/><rect x="1613.6" y="765.8" width="14.0" height="29.0" fill="none" stroke="#8ea6c2" stroke-width="1.6"/><line x1="1639.3" y1="758.5" x2="1639.3" y2="758.5" stroke="#8ea6c2" stroke-width="1.7"/><line x1="1639.3" y1="767.4" x2="1639.3" y2="767.4" stroke="#8ea6c2" stroke-width="1.7"/><rect x="1632.3" y="759.3" width="14.0" height="7.3" fill="none" stroke="#8ea6c2" stroke-width="1.6"/><polyline points="44.0,599.0 53.0,599.0 71.7,580.4 90.3,595.2 109.0,584.4 127.6,574.3 146.3,590.0 165.0,623.3 183.6,605.2 202.3,623.3 221.0,621.5 239.6,677.7 258.3,699.6 276.9,695.7 295.6,687.0 314.3,732.6 332.9,730.3 351.6,718.5 370.3,731.8 388.9,704.3 407.6,687.0 426.2,666.4 444.9,689.3 463.6,673.1 482.2,682.0 500.9,674.2 519.6,712.7 538.2,678.3 556.9,680.4 575.5,674.2 594.2,661.7 612.9,695.2 631.5,692.6 650.2,662.9 668.9,686.9 687.5,680.0 706.2,674.4 724.8,645.2 743.5,644.4 762.2,669.2 780.8,701.5 799.5,690.6 818.2,681.7 836.8,713.3 855.5,727.2 874.1,756.7 892.8,741.7 911.5,741.7 930.1,737.8 948.8,743.3 967.5,732.2 986.1,724.8 1004.8,715.0 1023.4,756.1 1042.1,747.8 1060.8,756.7 1079.4,760.0 1098.1,726.7 1116.8,733.3 1135.4,719.4 1154.1,696.1 1172.7,752.9 1191.4,749.0 1210.1,735.6 1228.7,726.2 1247.4,723.0 1266.1,742.7 1284.7,789.0 1303.4,780.5 1322.0,830.0 1340.7,851.3 1359.4,847.0 1378.0,798.6 1396.7,778.9 1415.4,789.4 1434.0,785.2 1452.7,730.6 1471.3,775.0 1490.0,804.1 1508.7,814.3 1527.3,818.2 1546.0,813.0 1564.7,809.4 1583.3,788.5 1602.0,809.4 1620.6,770.6 1639.3,766.9" fill="none" stroke="#00a000" stroke-width="1.35"/><polyline points="44.0,572.5 53.0,573.0 71.7,560.7 90.3,576.0 109.0,566.9 127.6,556.7 146.3,570.5 165.0,606.7 183.6,586.7 202.3,602.0 221.0,603.0 239.6,654.3 258.3,674.4 276.9,672.8 295.6,661.0 314.3,709.3 332.9,708.2 351.6,694.9 370.3,709.0 388.9,687.0 407.6,665.0 426.2,642.4 444.9,663.8 463.6,646.6 482.2,655.4 500.9,651.2 519.6,689.3 538.2,655.4 556.9,658.0 575.5,649.0 594.2,640.3 612.9,674.4 631.5,672.8 650.2,642.6 668.9,665.5 687.5,663.0 706.2,657.7 724.8,625.4 743.5,624.2 762.2,649.4 780.8,678.0 799.5,671.7 818.2,665.2 836.8,699.4 855.5,712.8 874.1,738.3 892.8,720.6 911.5,721.7 930.1,717.0 948.8,721.7 967.5,710.6 986.1,704.5 1004.8,692.2 1023.4,733.9 1042.1,726.7 1060.8,735.0 1079.4,737.8 1098.1,705.6 1116.8,712.2 1135.4,699.4 1154.1,671.7 1172.7,724.0 1191.4,719.0 1210.1,708.0 1228.7,704.2 1247.4,708.0 1266.1,726.2 1284.7,767.9 1303.4,759.2 1322.0,801.7 1340.7,823.0 1359.4,820.0 1378.0,767.1 1396.7,745.4 1415.4,759.2 1434.0,755.3 1452.7,701.8 1471.3,740.4 1490.0,775.0 1508.7,784.4 1527.3,793.9 1546.0,790.0 1564.7,791.9 1583.3,766.9 1602.0,786.0 1620.6,747.0 1639.3,742.8" fill="none" stroke="#ff0000" stroke-width="1.35"/><path d="M1503 713.5 H1511.5 V730 H1519 L1507.3 742.5 L1495.5 730 H1503 Z" fill="#ff0000"/><path d="M1634 840 H1642 V824 H1649 L1638 811.5 L1626 824 H1634 Z" fill="#009000"/><line x1="1854.5" y1="527" x2="1854.5" y2="881" stroke="#f0f0f0" stroke-width="1.6"/><line x1="1854.5" y1="550.955" x2="1859.5" y2="550.955" stroke="#e8e8e8" stroke-width="1.8"/><line x1="1854.5" y1="564.2" x2="1865.5" y2="564.2" stroke="#e8e8e8" stroke-width="1.8"/><line x1="1854.5" y1="577.445" x2="1859.5" y2="577.445" stroke="#e8e8e8" stroke-width="1.8"/><line x1="1854.5" y1="590.69" x2="1865.5" y2="590.69" stroke="#e8e8e8" stroke-width="1.8"/><line x1="1854.5" y1="603.9350000000001" x2="1859.5" y2="603.9350000000001" stroke="#e8e8e8" stroke-width="1.8"/><line x1="1854.5" y1="617.1800000000001" x2="1865.5" y2="617.1800000000001" stroke="#e8e8e8" stroke-width="1.8"/><line x1="1854.5" y1="630.4250000000001" x2="1859.5" y2="630.4250000000001" stroke="#e8e8e8" stroke-width="1.8"/><line x1="1854.5" y1="643.6700000000001" x2="1865.5" y2="643.6700000000001" stroke="#e8e8e8" stroke-width="1.8"/><line x1="1854.5" y1="656.9150000000001" x2="1859.5" y2="656.9150000000001" stroke="#e8e8e8" stroke-width="1.8"/><line x1="1854.5" y1="670.1600000000001" x2="1865.5" y2="670.1600000000001" stroke="#e8e8e8" stroke-width="1.8"/><line x1="1854.5" y1="683.4050000000001" x2="1859.5" y2="683.4050000000001" stroke="#e8e8e8" stroke-width="1.8"/><line x1="1854.5" y1="696.6500000000001" x2="1865.5" y2="696.6500000000001" stroke="#e8e8e8" stroke-width="1.8"/><line x1="1854.5" y1="709.895" x2="1859.5" y2="709.895" stroke="#e8e8e8" stroke-width="1.8"/><line x1="1854.5" y1="723.1400000000001" x2="1865.5" y2="723.1400000000001" stroke="#e8e8e8" stroke-width="1.8"/><line x1="1854.5" y1="736.385" x2="1859.5" y2="736.385" stroke="#e8e8e8" stroke-width="1.8"/><line x1="1854.5" y1="749.63" x2="1865.5" y2="749.63" stroke="#e8e8e8" stroke-width="1.8"/><line x1="1854.5" y1="762.875" x2="1859.5" y2="762.875" stroke="#e8e8e8" stroke-width="1.8"/><line x1="1854.5" y1="776.12" x2="1865.5" y2="776.12" stroke="#e8e8e8" stroke-width="1.8"/><line x1="1854.5" y1="789.365" x2="1859.5" y2="789.365" stroke="#e8e8e8" stroke-width="1.8"/><line x1="1854.5" y1="802.61" x2="1865.5" y2="802.61" stroke="#e8e8e8" stroke-width="1.8"/><line x1="1854.5" y1="815.855" x2="1859.5" y2="815.855" stroke="#e8e8e8" stroke-width="1.8"/><line x1="1854.5" y1="829.1" x2="1865.5" y2="829.1" stroke="#e8e8e8" stroke-width="1.8"/><line x1="1854.5" y1="842.345" x2="1859.5" y2="842.345" stroke="#e8e8e8" stroke-width="1.8"/><line x1="1854.5" y1="855.59" x2="1865.5" y2="855.59" stroke="#e8e8e8" stroke-width="1.8"/><line x1="1854.5" y1="868.835" x2="1859.5" y2="868.835" stroke="#e8e8e8" stroke-width="1.8"/></svg>
<svg style="left:0px;top:0px" width="1920" height="1080" viewBox="0 0 1920 1080"><line x1="1508" y1="124" x2="1508" y2="194" stroke="#e00000" stroke-width="1.6"/><line x1="1639.3" y1="124" x2="1639.3" y2="194" stroke="#00a000" stroke-width="1.6"/><line x1="1508" y1="226" x2="1508" y2="320" stroke="#e00000" stroke-width="1.6"/><line x1="1639.3" y1="226" x2="1639.3" y2="320" stroke="#00a000" stroke-width="1.6"/><line x1="1508" y1="353" x2="1508" y2="494" stroke="#e00000" stroke-width="1.6"/><line x1="1639.3" y1="353" x2="1639.3" y2="494" stroke="#00a000" stroke-width="1.6"/><line x1="1508" y1="527" x2="1508" y2="881" stroke="#e00000" stroke-width="1.6"/><line x1="1639.3" y1="527" x2="1639.3" y2="881" stroke="#00a000" stroke-width="1.6"/></svg>
<div class="t " style="left:1883px;top:557.55px;font-size:14px;color:#f2f2f2;;transform:scaleX(1.0642);transform-origin:0 0">1.06</div>
<div class="t " style="left:1883px;top:584.04px;font-size:14px;color:#f2f2f2;;transform:scaleX(1.0642);transform-origin:0 0">1.05</div>
<div class="t " style="left:1883px;top:610.53px;font-size:14px;color:#f2f2f2;;transform:scaleX(1.0642);transform-origin:0 0">1.04</div>
<div class="t " style="left:1883px;top:637.02px;font-size:14px;color:#f2f2f2;;transform:scaleX(1.0642);transform-origin:0 0">1.03</div>
<div class="t " style="left:1883px;top:663.51px;font-size:14px;color:#f2f2f2;;transform:scaleX(1.0642);transform-origin:0 0">1.02</div>
<div class="t " style="left:1883px;top:690.0px;font-size:14px;color:#f2f2f2;;transform:scaleX(1.0642);transform-origin:0 0">1.01</div>
<div class="t " style="left:1883px;top:716.49px;font-size:14px;color:#f2f2f2;;transform:scaleX(1.0642);transform-origin:0 0">1.00</div>
<div class="t " style="left:1883px;top:742.98px;font-size:14px;color:#f2f2f2;;transform:scaleX(1.0642);transform-origin:0 0">0.99</div>
<div class="t " style="left:1883px;top:769.47px;font-size:14px;color:#f2f2f2;;transform:scaleX(1.0642);transform-origin:0 0">0.98</div>
<div class="t " style="left:1883px;top:795.96px;font-size:14px;color:#f2f2f2;;transform:scaleX(1.0642);transform-origin:0 0">0.97</div>
<div class="t " style="left:1883px;top:822.45px;font-size:14px;color:#f2f2f2;;transform:scaleX(1.0642);transform-origin:0 0">0.96</div>
<div class="t " style="left:1883px;top:848.94px;font-size:14px;color:#f2f2f2;;transform:scaleX(1.0642);transform-origin:0 0">0.95</div>
<div style="position:absolute;left:1859px;top:747px;width:54px;height:23px;background:#000;border:1.5px solid #f0f0f0;box-sizing:border-box"></div>
<div class="t " style="left:1862px;top:751.87px;font-size:13.5px;color:#00dd00;;transform:scaleX(0.9711);transform-origin:0 0">0.98610</div>
<div style="position:absolute;left:44px;top:881px;width:1873px;height:4px;background:#dcdcdc"></div>
<div style="position:absolute;left:44px;top:885px;width:1810px;height:40px;overflow:hidden;background:#000">
<svg style="left:0;top:0" width="1810" height="40"><line x1="0" y1="19.8" x2="1810" y2="19.8" stroke="#e8e8e8" stroke-width="1.6"/><line x1="0" y1="39.3" x2="1810" y2="39.3" stroke="#707070" stroke-width="1.4"/><line x1="-9.7" y1="0" x2="-9.7" y2="19" stroke="#d4d4d4" stroke-width="1.6"/><line x1="83.6" y1="0" x2="83.6" y2="19" stroke="#d4d4d4" stroke-width="1.6"/><line x1="177.0" y1="0" x2="177.0" y2="19" stroke="#d4d4d4" stroke-width="1.6"/><line x1="270.3" y1="0" x2="270.3" y2="19" stroke="#d4d4d4" stroke-width="1.6"/><line x1="363.6" y1="0" x2="363.6" y2="19" stroke="#d4d4d4" stroke-width="1.6"/><line x1="456.9" y1="0" x2="456.9" y2="19" stroke="#d4d4d4" stroke-width="1.6"/><line x1="550.2" y1="0" x2="550.2" y2="19" stroke="#d4d4d4" stroke-width="1.6"/><line x1="643.5" y1="0" x2="643.5" y2="19" stroke="#d4d4d4" stroke-width="1.6"/><line x1="736.8" y1="0" x2="736.8" y2="19" stroke="#d4d4d4" stroke-width="1.6"/><line x1="830.1" y1="0" x2="830.1" y2="19" stroke="#d4d4d4" stroke-width="1.6"/><line x1="923.5" y1="0" x2="923.5" y2="19" stroke="#d4d4d4" stroke-width="1.6"/><line x1="1016.8" y1="0" x2="1016.8" y2="19" stroke="#d4d4d4" stroke-width="1.6"/><line x1="1110.1" y1="0" x2="1110.1" y2="19" stroke="#d4d4d4" stroke-width="1.6"/><line x1="1203.4" y1="0" x2="1203.4" y2="19" stroke="#d4d4d4" stroke-width="1.6"/><line x1="1296.7" y1="0" x2="1296.7" y2="19" stroke="#d4d4d4" stroke-width="1.6"/><line x1="1390.0" y1="0" x2="1390.0" y2="19" stroke="#d4d4d4" stroke-width="1.6"/><line x1="1483.3" y1="0" x2="1483.3" y2="19" stroke="#d4d4d4" stroke-width="1.6"/><line x1="1576.6" y1="0" x2="1576.6" y2="19" stroke="#d4d4d4" stroke-width="1.6"/><line x1="1669.9" y1="0" x2="1669.9" y2="19" stroke="#d4d4d4" stroke-width="1.6"/><line x1="1763.3" y1="0" x2="1763.3" y2="19" stroke="#d4d4d4" stroke-width="1.6"/><line x1="157.3" y1="0" x2="157.3" y2="39" stroke="#d4d4d4" stroke-width="1.6"/><line x1="549.2" y1="20" x2="549.2" y2="39" stroke="#d4d4d4" stroke-width="1.6"/><line x1="978.4" y1="0" x2="978.4" y2="39" stroke="#d4d4d4" stroke-width="1.6"/><line x1="1389.0" y1="20" x2="1389.0" y2="39" stroke="#d4d4d4" stroke-width="1.6"/><line x1="1780.9" y1="20" x2="1780.9" y2="39" stroke="#d4d4d4" stroke-width="1.6"/></svg><div class="t" style="left:-6.7px;top:1.3px;font-size:15px;color:#f4f4f4">20</div><div class="t" style="left:86.6px;top:1.3px;font-size:15px;color:#f4f4f4">27</div><div class="t" style="left:180.0px;top:1.3px;font-size:15px;color:#f4f4f4">4</div><div class="t" style="left:273.3px;top:1.3px;font-size:15px;color:#f4f4f4">11</div><div class="t" style="left:366.6px;top:1.3px;font-size:15px;color:#f4f4f4">18</div><div class="t" style="left:459.9px;top:1.3px;font-size:15px;color:#f4f4f4">25</div><div class="t" style="left:553.2px;top:1.3px;font-size:15px;color:#f4f4f4">1</div><div class="t" style="left:646.5px;top:1.3px;font-size:15px;color:#f4f4f4">8</div><div class="t" style="left:739.8px;top:1.3px;font-size:15px;color:#f4f4f4">15</div><div class="t" style="left:833.1px;top:1.3px;font-size:15px;color:#f4f4f4">22</div><div class="t" style="left:926.5px;top:1.3px;font-size:15px;color:#f4f4f4">29</div><div class="t" style="left:1019.8px;top:1.3px;font-size:15px;color:#f4f4f4">5</div><div class="t" style="left:1113.1px;top:1.3px;font-size:15px;color:#f4f4f4">12</div><div class="t" style="left:1206.4px;top:1.3px;font-size:15px;color:#f4f4f4">19</div><div class="t" style="left:1299.7px;top:1.3px;font-size:15px;color:#f4f4f4">26</div><div class="t" style="left:1393.0px;top:1.3px;font-size:15px;color:#f4f4f4">3</div><div class="t" style="left:1486.3px;top:1.3px;font-size:15px;color:#f4f4f4">10</div><div class="t" style="left:1579.6px;top:1.3px;font-size:15px;color:#f4f4f4">17</div><div class="t" style="left:1672.9px;top:1.3px;font-size:15px;color:#f4f4f4">24</div><div class="t" style="left:1766.3px;top:1.3px;font-size:15px;color:#f4f4f4">31</div><div class="t" style="left:160.3px;top:21.2px;font-size:15px;color:#f4f4f4">July</div><div class="t" style="left:552.2px;top:21.2px;font-size:15px;color:#f4f4f4">August</div><div class="t" style="left:981.4px;top:21.2px;font-size:15px;color:#f4f4f4">September</div><div class="t" style="left:1392.0px;top:21.2px;font-size:15px;color:#f4f4f4">October</div><div class="t" style="left:1783.9px;top:21.2px;font-size:15px;color:#f4f4f4">Nov</div></div>
<div style="position:absolute;left:44px;top:925px;width:1873px;height:29px;background:#efefef"></div>
<div style="position:absolute;left:1854px;top:885px;width:63px;height:40px;background:#dcdcdc"></div>
<div style="position:absolute;left:1452px;top:936px;width:189px;height:6px;background:#7e7e7e"></div>
<div style="position:absolute;left:1665px;top:930px;width:1px;height:19px;background:#999"></div>
<div style="position:absolute;left:1666px;top:930px;width:1px;height:19px;background:#fff"></div>
<svg style="left:1673px;top:929px" width="18" height="19" viewBox="0 0 18 19"><path d="M3 9 A6 6 0 0 1 14 6" fill="none" stroke="#444" stroke-width="2.5"/><path d="M11 2 L16 7 L10 8 Z" fill="#444"/><path d="M15 10 A6 6 0 0 1 4 13" fill="none" stroke="#444" stroke-width="2.5"/><path d="M7 17 L2 12 L8 11 Z" fill="#444"/></svg>
<div class="t " style="left:1703px;top:932px;font-size:15px;color:#555;font-weight:bold">D</div>
<div style="position:absolute;left:1725px;top:930px;width:1px;height:19px;background:#999"></div>
<div style="position:absolute;left:1726px;top:930px;width:1px;height:19px;background:#fff"></div>
<svg style="left:1737px;top:929px" width="12" height="19" viewBox="0 0 12 19"><path d="M6 2 V17" stroke="#333" stroke-width="2.5"/><path d="M1 6 L6 1 L11 6 Z M1 13 L6 18 L11 13 Z" fill="#333"/></svg>
<svg style="left:1759px;top:929px" width="20" height="20" viewBox="0 0 20 20"><path d="M10 2 V18 M2 10 H18" stroke="#333" stroke-width="2.5"/><path d="M6 5 L10 1 L14 5 Z M6 15 L10 19 L14 15 Z M5 6 L1 10 L5 14 Z M15 6 L19 10 L15 14 Z" fill="#333"/></svg>
<svg style="left:1786px;top:930px" width="18" height="18" viewBox="0 0 18 18"><circle cx="9" cy="9" r="7" fill="none" stroke="#555" stroke-width="1.6"/><path d="M5 9 H13" stroke="#333" stroke-width="2.2"/></svg>
<svg style="left:1812px;top:930px" width="18" height="18" viewBox="0 0 18 18"><circle cx="9" cy="9" r="7" fill="none" stroke="#555" stroke-width="1.6"/><path d="M5 9 H13 M9 5 V13" stroke="#333" stroke-width="2.2"/></svg>
<div style="position:absolute;left:1838px;top:930px;width:1px;height:19px;background:#999"></div>
<div style="position:absolute;left:1839px;top:930px;width:1px;height:19px;background:#fff"></div>
<svg style="left:1849px;top:932px" width="10" height="14" viewBox="0 0 10 14"><path d="M9 1 L2 7 L9 13 Z" fill="#c8c8c8"/></svg>
<svg style="left:1877px;top:932px" width="10" height="14" viewBox="0 0 10 14"><path d="M1 1 L8 7 L1 13 Z" fill="#c8c8c8"/></svg>
<svg style="left:1898px;top:930px" width="17" height="17" viewBox="0 0 17 17"><rect x="1" y="2" width="15" height="13" fill="#f4f4f4" stroke="#555" stroke-width="1.3"/><rect x="1" y="2" width="15" height="3" fill="#777"/><path d="M3 8 H14 M3 11 H14" stroke="#666"/></svg>
<div style="position:absolute;left:0px;top:954px;width:1920px;height:42px;background:#e9e9e9;border-top:1px solid #dadada;box-sizing:border-box"></div>
<div style="position:absolute;left:0px;top:955px;width:1920px;height:1px;background:#fbfbfb"></div>
<div style="position:absolute;left:0px;top:994px;width:1920px;height:1px;background:#a8a8a8"></div>
<div style="position:absolute;left:0px;top:995px;width:1920px;height:1px;background:#f8f8f8"></div>
<div style="position:absolute;left:5px;top:958px;width:9px;height:36px;background:linear-gradient(90deg,#e4e4e4,#c6c6c6);border-radius:6px 0 0 6px"></div>
<div style="position:absolute;left:7px;top:974px;width:4px;height:4px;background:#7a7a7a"></div>
<div style="position:absolute;left:15px;top:958px;width:1px;height:36px;background:#b8b8b8"></div>
<div style="position:absolute;left:17px;top:963px;width:161px;height:27px;background:#fff;border:1px solid #a8a8a8;border-radius:2px;box-sizing:border-box"></div>
<div style="position:absolute;left:36px;top:976px;width:101.5px;height:2px;background:#333"></div>
<svg style="left:160px;top:971px" width="14" height="9" viewBox="0 0 14 9"><path d="M1 1 L7 7 L13 1" fill="none" stroke="#555" stroke-width="1.5"/></svg>
<div style="position:absolute;left:186px;top:963px;width:125px;height:27px;background:#fff;border:1px solid #a8a8a8;border-radius:2px;box-sizing:border-box"></div>
<div style="position:absolute;left:201.5px;top:976px;width:73.5px;height:2px;background:#333"></div>
<svg style="left:293px;top:971px" width="14" height="9" viewBox="0 0 14 9"><path d="M1 1 L7 7 L13 1" fill="none" stroke="#555" stroke-width="1.5"/></svg>
<div style="position:absolute;left:181px;top:960px;width:1px;height:32px;background:#c8c8c8"></div>
<div style="position:absolute;left:182px;top:960px;width:1px;height:32px;background:#fafafa"></div>
<div style="position:absolute;left:319px;top:957px;width:1px;height:38px;background:#aaa"></div>
<div style="position:absolute;left:320px;top:957px;width:1px;height:38px;background:#fafafa"></div>
<div style="position:absolute;left:327px;top:958px;width:9px;height:36px;background:linear-gradient(90deg,#e4e4e4,#c6c6c6);border-radius:6px 0 0 6px"></div>
<div style="position:absolute;left:329px;top:974px;width:4px;height:4px;background:#7a7a7a"></div>
<div style="position:absolute;left:337px;top:958px;width:1px;height:36px;background:#b8b8b8"></div>
<div style="position:absolute;left:341px;top:964px;width:12px;height:12px;background:#0000ff;border:1px solid #c0c0c0;box-sizing:border-box"></div>
<div style="position:absolute;left:356px;top:964px;width:12px;height:12px;background:#ff0000;border:1px solid #c0c0c0;box-sizing:border-box"></div>
<div style="position:absolute;left:371px;top:964px;width:12px;height:12px;background:#a8e8e8;border:1px solid #c0c0c0;box-sizing:border-box"></div>
<div style="position:absolute;left:386px;top:964px;width:12px;height:12px;background:#80f0c0;border:1px solid #c0c0c0;box-sizing:border-box"></div>
<div style="position:absolute;left:401px;top:964px;width:12px;height:12px;background:#7070c8;border:1px solid #c0c0c0;box-sizing:border-box"></div>
<div style="position:absolute;left:416px;top:964px;width:12px;height:12px;background:#ffa050;border:1px solid #c0c0c0;box-sizing:border-box"></div>
<div style="position:absolute;left:431px;top:964px;width:12px;height:12px;background:#ffc0cc;border:1px solid #c0c0c0;box-sizing:border-box"></div>
<div style="position:absolute;left:446px;top:964px;width:12px;height:12px;background:#e0e4f8;border:1px solid #c0c0c0;box-sizing:border-box"></div>
<div style="position:absolute;left:341px;top:978px;width:12px;height:12px;background:#ffcc00;border:1px solid #c0c0c0;box-sizing:border-box"></div>
<div style="position:absolute;left:356px;top:978px;width:12px;height:12px;background:#ffff00;border:1px solid #c0c0c0;box-sizing:border-box"></div>
<div style="position:absolute;left:371px;top:978px;width:12px;height:12px;background:#707070;border:1px solid #c0c0c0;box-sizing:border-box"></div>
<div style="position:absolute;left:386px;top:978px;width:12px;height:12px;background:#20c020;border:1px solid #c0c0c0;box-sizing:border-box"></div>
<div style="position:absolute;left:401px;top:978px;width:12px;height:12px;background:#fffcd8;border:1px solid #c0c0c0;box-sizing:border-box"></div>
<div style="position:absolute;left:416px;top:978px;width:12px;height:12px;background:#ff7020;border:1px solid #c0c0c0;box-sizing:border-box"></div>
<div style="position:absolute;left:431px;top:978px;width:12px;height:12px;background:#90f090;border:1px solid #c0c0c0;box-sizing:border-box"></div>
<div style="position:absolute;left:446px;top:978px;width:12px;height:12px;background:#8b0000;border:1px solid #c0c0c0;box-sizing:border-box"></div>
<svg style="left:456px;top:969px" width="12" height="20" viewBox="0 0 12 20"><circle cx="6" cy="4" r="3.5" fill="#8b0000"/><path d="M8 4 L12 2 L10 7 Z" fill="#222"/><rect x="1" y="11" width="11" height="6" fill="#111"/></svg>
<div style="position:absolute;left:480px;top:957px;width:1px;height:38px;background:#aaa"></div>
<div style="position:absolute;left:481px;top:957px;width:1px;height:38px;background:#fafafa"></div>
<div style="position:absolute;left:488px;top:958px;width:9px;height:36px;background:linear-gradient(90deg,#e4e4e4,#c6c6c6);border-radius:6px 0 0 6px"></div>
<div style="position:absolute;left:490px;top:974px;width:4px;height:4px;background:#7a7a7a"></div>
<div style="position:absolute;left:498px;top:958px;width:1px;height:36px;background:#b8b8b8"></div>
<svg style="left:505px;top:970px" width="21" height="17" viewBox="0 0 21 17"><rect x="0.5" y="0.5" width="19" height="15" fill="#f4f8fc" stroke="#8aa4c0"/><rect x="1" y="1" width="18" height="2" fill="#c4d4e4"/><path d="M3 12 L7 8 L9 10" fill="none" stroke="#e03030" stroke-width="1.2"/><text x="10" y="14" font-size="11" fill="#222" font-family="Liberation Serif">1</text></svg>
<svg style="left:539px;top:970px" width="21" height="17" viewBox="0 0 21 17"><rect x="0.5" y="0.5" width="19" height="15" fill="#f4f8fc" stroke="#8aa4c0"/><rect x="1" y="1" width="18" height="2" fill="#c4d4e4"/><path d="M3 12 L7 8 L9 10" fill="none" stroke="#e03030" stroke-width="1.2"/><text x="10" y="14" font-size="11" fill="#222" font-family="Liberation Serif">2</text></svg>
<svg style="left:573px;top:970px" width="21" height="17" viewBox="0 0 21 17"><rect x="0.5" y="0.5" width="19" height="15" fill="#f4f8fc" stroke="#8aa4c0"/><rect x="1" y="1" width="18" height="2" fill="#c4d4e4"/><path d="M3 12 L7 8 L9 10" fill="none" stroke="#e03030" stroke-width="1.2"/><text x="10" y="14" font-size="11" fill="#222" font-family="Liberation Serif">3</text></svg>
<svg style="left:606px;top:970px" width="21" height="17" viewBox="0 0 21 17"><rect x="0.5" y="0.5" width="19" height="15" fill="#f4f8fc" stroke="#8aa4c0"/><rect x="1" y="1" width="18" height="2" fill="#c4d4e4"/><path d="M3 12 L7 8 L9 10" fill="none" stroke="#e03030" stroke-width="1.2"/><text x="10" y="14" font-size="11" fill="#222" font-family="Liberation Serif">4</text></svg>
<svg style="left:640px;top:970px" width="21" height="17" viewBox="0 0 21 17"><rect x="0.5" y="0.5" width="19" height="15" fill="#f4f8fc" stroke="#8aa4c0"/><rect x="1" y="1" width="18" height="2" fill="#c4d4e4"/><path d="M3 12 L7 8 L9 10" fill="none" stroke="#e03030" stroke-width="1.2"/><text x="10" y="14" font-size="11" fill="#222" font-family="Liberation Serif">5</text></svg>
<svg style="left:674px;top:970px" width="21" height="17" viewBox="0 0 21 17"><rect x="0.5" y="0.5" width="19" height="15" fill="#f4f8fc" stroke="#8aa4c0"/><rect x="1" y="1" width="18" height="2" fill="#c4d4e4"/><path d="M3 12 L7 8 L9 10" fill="none" stroke="#e03030" stroke-width="1.2"/><text x="10" y="14" font-size="11" fill="#222" font-family="Liberation Serif">6</text></svg>
<div style="position:absolute;left:709px;top:957px;width:1px;height:38px;background:#aaa"></div>
<div style="position:absolute;left:710px;top:957px;width:1px;height:38px;background:#fafafa"></div>
<div style="position:absolute;left:0px;top:996px;width:1920px;height:24px;background:#444444"></div>
<div class="t " style="left:12.5px;top:1001.88px;font-size:15.5px;color:#f0f0f0;;transform:scaleX(0.9875);transform-origin:0 0">For Help, press F1</div>
<div class="t " style="left:1581.25px;top:1001.88px;font-size:15.5px;color:#f0f0f0;;transform:scaleX(0.9829);transform-origin:0 0">17/10/2022</div>
<div class="t " style="left:1776.25px;top:1001.88px;font-size:15.5px;color:#f0f0f0;;transform:scaleX(1.0039);transform-origin:0 0">0.94062</div>
<div style="position:absolute;left:1863px;top:998px;width:25px;height:20px;background:#f4f4f4"></div>
<div class="t " style="left:1868px;top:1000px;font-size:17px;color:#1a9a1a;font-weight:bold">$</div>
<div style="position:absolute;left:1893px;top:998px;width:26px;height:20px;background:#e8e8e8"></div>
<svg style="left:1895px;top:1000px" width="22" height="17" viewBox="0 0 22 17"><rect x="4" y="2" width="13" height="9" fill="#3a7ac8" stroke="#335"/><rect x="2" y="12" width="17" height="3" fill="#888"/><circle cx="18" cy="5" r="3" fill="#ddd"/></svg>
<div style="position:absolute;left:0px;top:1020px;width:1920px;height:60px;background:#1e1e27"></div>
<svg style="left:30px;top:1034px" width="22" height="34" viewBox="0 0 22 34"><path d="M9.5 8 V4 Q9.5 1.5 12 1.5 Q14.5 1.5 14.5 4 V7" fill="none" stroke="#8a8a8a" stroke-width="1.8"/><path d="M7.5 7.5 H11.5 L13 15 L9.8 30 L6.5 15 Z" fill="#40a8f4"/><path d="M7.5 7.5 H11.5 L11 10 H8 Z" fill="#2a88d8"/></svg>
<div class="t " style="left:63.75px;top:1032.5px;font-size:15px;color:#f4f4f4;;transform:scaleX(0.9175);transform-origin:0 0">20°C</div>
<div class="t " style="left:63.75px;top:1052.8px;font-size:15px;color:#dedede;;transform:scaleX(0.9783);transform-origin:0 0">Chuva a parar</div>
<svg style="left:505px;top:1035px" width="30" height="30" viewBox="0 0 30 30"><rect x="0" y="0" width="14" height="14" rx="1.5" fill="#5ac8f8"/><rect x="16" y="0" width="14" height="14" rx="1.5" fill="#40b8f4"/><rect x="0" y="16" width="14" height="14" rx="1.5" fill="#2aa8f0"/><rect x="16" y="16" width="14" height="14" rx="1.5" fill="#1898ec"/></svg>
<svg style="left:561px;top:1035px" width="30" height="30" viewBox="0 0 30 30"><circle cx="17" cy="12" r="9.5" fill="#45454f" stroke="#e4e4e4" stroke-width="3"/><path d="M10 19 L3 27" stroke="#d8d8d8" stroke-width="3.5" stroke-linecap="round"/></svg>
<svg style="left:615px;top:1035px" width="30" height="30" viewBox="0 0 30 30"><circle cx="15" cy="14" r="14" fill="#6a5ad8"/><path d="M4 22 L1 29 L10 26 Z" fill="#6a5ad8"/><rect x="7" y="9" width="12" height="11" rx="2" fill="#fff"/><path d="M19 13 L24 10 V19 L19 16 Z" fill="#fff"/></svg>
<svg style="left:670px;top:1035px" width="30" height="30" viewBox="0 0 30 30"><rect x="12" y="4" width="16" height="22" fill="#fff" stroke="#2b5fb0" stroke-width="1.5"/><path d="M15 9 H25 M15 12 H25 M15 15 H25 M15 18 H25 M15 21 H25" stroke="#2b5fb0" stroke-width="1.5"/><path d="M1 4 L18 1 V29 L1 26 Z" fill="#2b5fb0"/><text x="3" y="20" font-size="11" font-weight="bold" fill="#fff" font-family="Liberation Sans">W</text></svg>
<svg style="left:725px;top:1035px" width="30" height="30" viewBox="0 0 30 30"><defs><linearGradient id="msg" x1="0" y1="0" x2="0" y2="1"><stop offset="0" stop-color="#888"/><stop offset="0.6" stop-color="#111"/><stop offset="1" stop-color="#000"/></linearGradient></defs><rect x="0" y="0" width="30" height="30" rx="3" fill="url(#msg)"/><path d="M7 27 L8.3 16 H10.6 L9.6 27 Z M12 27 L14 9 H17 L15.2 27 Z M17.6 27 L20.6 2 H23.6 L20.8 27 Z" fill="#f08018"/></svg>
<svg style="left:780px;top:1035px" width="30" height="30" viewBox="0 0 30 30"><path d="M1 5 H11 L14 8 H29 V28 H1 Z" fill="#f0b818"/><rect x="1" y="10" width="28" height="18" fill="#ffd440"/><rect x="8" y="21" width="16" height="5" rx="1" fill="#1a78d8"/></svg>
<svg style="left:834px;top:1033px" width="36" height="36" viewBox="0 0 36 36"><circle cx="16.5" cy="17" r="15" fill="#e0302a"/><path d="M16.5 17 L29.5 9.5 A15 15 0 0 1 24 30 Z" fill="#f8c020"/><path d="M16.5 17 L24 30 A15 15 0 0 1 3.5 9.5 Z" fill="#2a9a40"/><circle cx="16.5" cy="17" r="7" fill="#fff"/><circle cx="16.5" cy="17" r="5.5" fill="#3a7ae8"/><circle cx="26.5" cy="8" r="8.5" fill="#e8700e"/><text x="22.5" y="12.5" font-size="10" font-weight="bold" fill="#fff" font-family="Liberation Sans">N</text></svg>
<svg style="left:890px;top:1035px" width="30" height="30" viewBox="0 0 30 30"><rect x="10" y="3" width="18" height="24" fill="#fff" stroke="#c8401c" stroke-width="1.5"/><path d="M1 3 L17 1 V29 L1 27 Z" fill="#d04a20"/><text x="4" y="20" font-size="12" font-weight="bold" fill="#fff" font-family="Liberation Sans">P</text></svg>
<svg style="left:945px;top:1035px" width="30" height="30" viewBox="0 0 30 30"><path d="M15 1 L24 26 H6 Z" fill="#ff8800"/><path d="M10 12 H20 M8 19 H22" stroke="#fff" stroke-width="3"/><rect x="3" y="25" width="24" height="4" fill="#ff8800"/></svg>
<svg style="left:1000px;top:1035px" width="30" height="30" viewBox="0 0 30 30"><circle cx="15" cy="15" r="14" fill="#1a8ad8"/><path d="M3 18 Q8 4 22 6 Q30 10 28 18 Q22 12 14 15 Q10 20 16 26 Q5 26 3 18 Z" fill="#5ae07a"/><circle cx="17" cy="19" r="6" fill="#0e5aa8"/></svg>
<svg style="left:1055px;top:1035px" width="30" height="30" viewBox="0 0 30 30"><rect x="12" y="4" width="16" height="22" fill="#fff" stroke="#3a52b8" stroke-width="1.5"/><path d="M1 4 L18 1 V29 L1 26 Z" fill="#3a52b8"/><text x="4" y="20" font-size="12" font-weight="bold" fill="#fff" font-family="Liberation Sans">V</text></svg>
<svg style="left:1110px;top:1035px" width="30" height="30" viewBox="0 0 30 30"><rect x="12" y="4" width="16" height="22" fill="#fff" stroke="#1d7a44" stroke-width="1.5"/><path d="M15 9 H25 M15 14 H25 M15 19 H25 M20 6 V24" stroke="#1d7a44" stroke-width="1.5"/><path d="M1 4 L18 1 V29 L1 26 Z" fill="#1d7a44"/><text x="4" y="20" font-size="12" font-weight="bold" fill="#fff" font-family="Liberation Sans">X</text></svg>
<svg style="left:1165px;top:1035px" width="30" height="30" viewBox="0 0 30 30"><circle cx="15" cy="15" r="14" fill="#e0302a"/><path d="M15 15 L27 8 A14 14 0 0 1 22 27 Z" fill="#f8c020"/><path d="M15 15 L22 27 A14 14 0 0 1 3 8 Z" fill="#2a9a40"/><circle cx="15" cy="15" r="6.5" fill="#fff"/><circle cx="15" cy="15" r="5" fill="#3a7ae8"/></svg>
<svg style="left:1220px;top:1035px" width="30" height="30" viewBox="0 0 30 30"><rect x="4" y="0" width="23" height="30" rx="2" fill="#8a98a8"/><rect x="6" y="2" width="19" height="6" fill="#40c8f0"/><path d="M7 11 H11 V15 H7 Z M13 11 H17 V15 H13 Z M19 11 H23 V15 H19 Z M7 17 H11 V21 H7 Z M13 17 H17 V21 H13 Z M7 23 H11 V27 H7 Z M13 23 H17 V27 H13 Z" fill="#dfe4ea"/><rect x="19" y="17" width="4" height="10" fill="#1a5aa8"/></svg>
<svg style="left:1275px;top:1035px" width="30" height="30" viewBox="0 0 30 30"><rect x="0" y="0" width="30" height="30" fill="#0e8a8a"/><path d="M8 24 L6 14 Q10 10 15 14 Q20 10 24 14 L22 24 Z" fill="#fff" stroke="#222"/><rect x="7" y="24" width="16" height="4" fill="#fff" stroke="#222"/><path d="M15 3 V10 M12 6 H18" stroke="#222" stroke-width="1.6"/></svg>
<div style="position:absolute;left:1321px;top:1025px;width:49px;height:50px;background:#2d2d39;border-radius:5px;box-shadow:inset 0 0 0 1px #34343f"></div>
<svg style="left:1330px;top:1035px" width="30" height="30" viewBox="0 0 30 30"><defs><linearGradient id="msg" x1="0" y1="0" x2="0" y2="1"><stop offset="0" stop-color="#888"/><stop offset="0.6" stop-color="#111"/><stop offset="1" stop-color="#000"/></linearGradient></defs><rect x="0" y="0" width="30" height="30" rx="3" fill="url(#msg)"/><path d="M7 27 L8.3 16 H10.6 L9.6 27 Z M12 27 L14 9 H17 L15.2 27 Z M17.6 27 L20.6 2 H23.6 L20.8 27 Z" fill="#f08018"/></svg>
<svg style="left:1385px;top:1035px" width="30" height="30" viewBox="0 0 30 30"><rect x="1" y="1" width="28" height="28" rx="3" fill="none" stroke="#a02030" stroke-width="1.5"/><text x="4" y="23" font-size="13" fill="#b02838" font-family="Liberation Sans">Pro</text><path d="M20 6 H26" stroke="#b02838" stroke-width="2"/></svg>
<div style="position:absolute;left:681px;top:1070.5px;width:8px;height:3.5px;background:#9a9aa2;border-radius:2px"></div>
<div style="position:absolute;left:847px;top:1070.5px;width:8px;height:3.5px;background:#9a9aa2;border-radius:2px"></div>
<div style="position:absolute;left:1012px;top:1070.5px;width:8px;height:3.5px;background:#9a9aa2;border-radius:2px"></div>
<div style="position:absolute;left:1122px;top:1070.5px;width:8px;height:3.5px;background:#9a9aa2;border-radius:2px"></div>
<div style="position:absolute;left:1232px;top:1070.5px;width:8px;height:3.5px;background:#9a9aa2;border-radius:2px"></div>
<div style="position:absolute;left:1336px;top:1070.5px;width:20px;height:3.5px;background:#4cc2ff;border-radius:2px"></div>
<div style="position:absolute;left:1397px;top:1070.5px;width:8px;height:3.5px;background:#9a9aa2;border-radius:2px"></div>
<svg style="left:1631px;top:1043px" width="16" height="10" viewBox="0 0 16 10"><path d="M1 9 L8 2 L15 9" fill="none" stroke="#eee" stroke-width="1.5"/></svg>
<svg style="left:1659px;top:1041px" width="22" height="22" viewBox="0 0 22 22"><ellipse cx="9" cy="9" rx="8" ry="6" fill="#d8d8d8"/><circle cx="15" cy="15" r="5.5" fill="#e02a2a"/><path d="M13 13 L17 17 M17 13 L13 17" stroke="#fff" stroke-width="1.3"/></svg>
<svg style="left:1694px;top:1039px" width="22" height="18" viewBox="0 0 22 18"><path d="M2 7 Q11 -1 20 7" fill="none" stroke="#eee" stroke-width="2"/><path d="M5 10 Q11 4 17 10" fill="none" stroke="#eee" stroke-width="2"/><path d="M8 13 Q11 10 14 13" fill="none" stroke="#eee" stroke-width="2"/><circle cx="11" cy="16" r="1.5" fill="#eee"/></svg>
<svg style="left:1724px;top:1040px" width="22" height="18" viewBox="0 0 22 18"><path d="M2 6 H6 L11 2 V16 L6 12 H2 Z" fill="none" stroke="#eee" stroke-width="1.5"/><path d="M14 6 Q16 9 14 12 M17 4 Q20 9 17 14" fill="none" stroke="#eee" stroke-width="1.5"/></svg>
<svg style="left:1754px;top:1039px" width="24" height="20" viewBox="0 0 24 20"><rect x="6" y="5" width="14" height="10" rx="1.5" fill="none" stroke="#eee" stroke-width="1.5"/><rect x="20" y="8" width="2" height="4" fill="#eee"/><rect x="8" y="7" width="5" height="6" fill="#eee"/><path d="M3 2 V7 M6 2 V7 M2 7 H7 V10 Q4.5 13 2 10 Z" fill="#eee" stroke="#eee"/></svg>
<div class="t " style="left:1836.75px;top:1032.3px;font-size:15px;color:#f4f4f4;;transform:scaleX(0.7990);transform-origin:0 0">21:41</div>
<div class="t " style="left:1793.75px;top:1052.3px;font-size:15px;color:#f4f4f4;;transform:scaleX(0.9623);transform-origin:0 0">18/10/2022</div>
<svg style="left:1876px;top:1040px" width="22" height="22" viewBox="0 0 22 22"><circle cx="11" cy="11" r="10" fill="#4cc2ff"/><text x="7.5" y="16" font-size="13" fill="#111" font-family="Liberation Sans">1</text></svg>
</body></html>
